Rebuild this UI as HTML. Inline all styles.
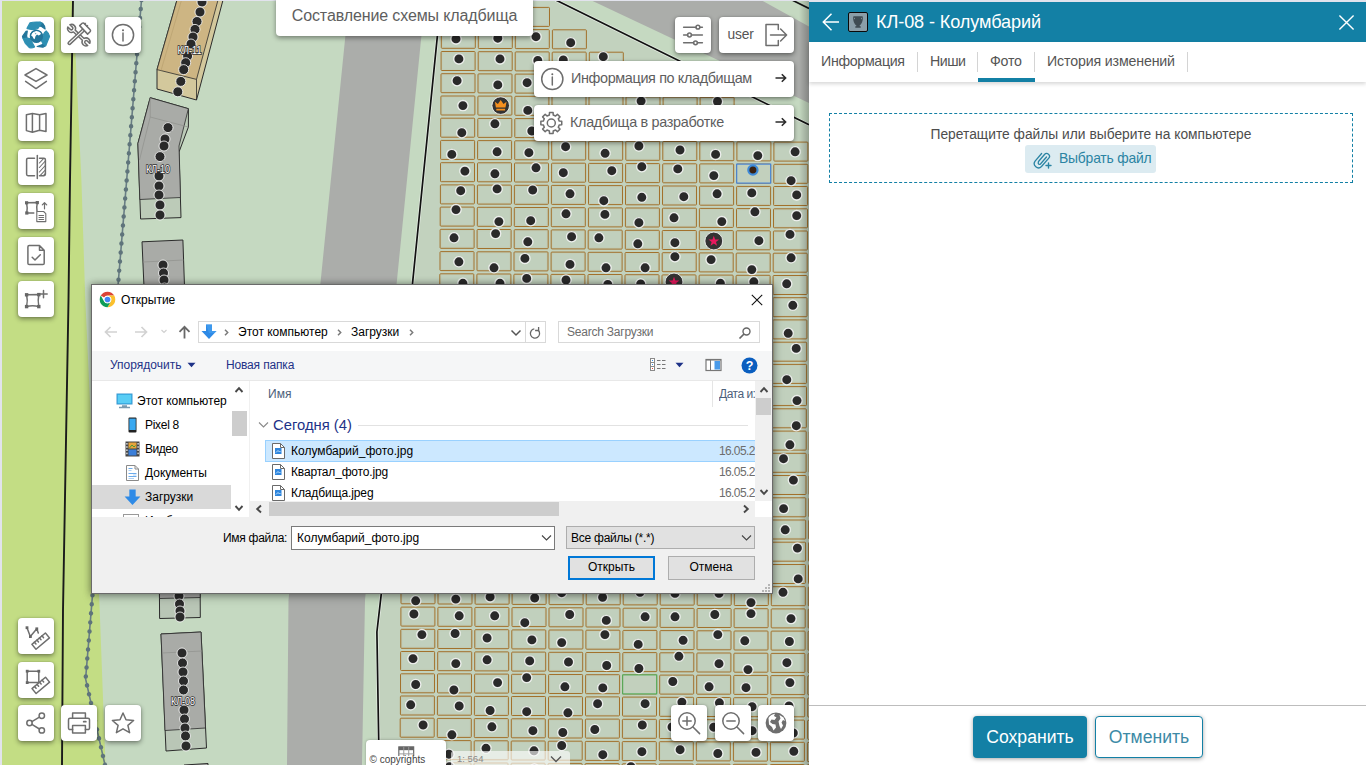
<!DOCTYPE html>
<html lang="ru">
<head>
<meta charset="utf-8">
<title>Составление схемы кладбища</title>
<style>
*{box-sizing:border-box;margin:0;padding:0}
html,body{width:1366px;height:765px;overflow:hidden}
body{position:relative;background:#e2e3ed;font-family:"Liberation Sans",Arial,sans-serif;color:#555}
#mapwrap{position:absolute;left:2px;top:1px;width:807px;height:764px;overflow:hidden;background:#c5d9c1}
#mapwrap svg.map{position:absolute;left:-2px;top:-1px}
.mb{position:absolute;background:#fff;border-radius:4px;box-shadow:0 2px 5px rgba(0,0,0,.42),0 0 2px rgba(0,0,0,.18);width:36px;height:36px}
.mb svg{position:absolute;left:0;top:0;width:36px;height:36px}
.ic{fill:none;stroke:#6e6e6e;stroke-width:1.5;stroke-linecap:round;stroke-linejoin:round}
.bar{position:absolute;left:534px;width:260px;height:36px;background:#fff;border-radius:4px;box-shadow:0 2px 5px rgba(0,0,0,.42),0 0 2px rgba(0,0,0,.18);font-size:14.4px;color:#5e5e5e;line-height:36px;white-space:nowrap;letter-spacing:-.36px}
.bar span.t{position:absolute;left:37px;top:-1px}
.bar span.a{position:absolute;right:9px;top:-2px;font-size:18px;color:#333}
#title{position:absolute;left:276px;top:-4px;width:257px;height:40px;background:#fff;border-radius:4px;box-shadow:0 2px 5px rgba(0,0,0,.42);font-size:16px;letter-spacing:-.12px;color:#5e5e5e;text-align:center;line-height:39px;white-space:nowrap}
#panelshadow{position:absolute;left:797px;top:0;width:12px;height:765px;background:linear-gradient(to right,rgba(0,0,0,0),rgba(0,0,0,.28))}
/* right panel */
#panel{position:absolute;left:809px;top:2px;width:557px;height:763px;background:#fff}
#phead{position:absolute;left:0;top:0;width:557px;height:40px;background:#1380a5;color:#fff}
#phead .ttl{position:absolute;left:67px;top:10px;font-size:18.1px;line-height:21px;white-space:nowrap;letter-spacing:-.1px}
#tabs{position:absolute;left:0;top:40px;width:557px;height:40px;background:#fff;box-shadow:0 2px 4px rgba(0,0,0,.16);font-size:14.2px;color:#555}
#tabs .tab{position:absolute;top:0;height:40px;line-height:38px;white-space:nowrap}
#tabs .sep{position:absolute;top:10px;width:1px;height:20px;background:#d4d4d4}
#tabs .ul{position:absolute;left:169px;top:36px;width:57px;height:4px;background:#1380a5}
#drop{position:absolute;left:20px;top:111px;width:524px;height:70px;border:1px dashed #1380a5}
#drop .msg{position:absolute;left:0;width:100%;top:12px;text-align:center;font-size:13.8px;color:#4d4d4d;line-height:18px;white-space:nowrap}
#drop .pick{position:absolute;left:195px;top:31px;width:131px;height:28px;background:#dcebf1;border-radius:3px;color:#2b84a3;font-size:13.9px;letter-spacing:-.2px;line-height:27px;white-space:nowrap}
#drop .pick span{position:absolute;left:34px;top:0}
#pfoot{position:absolute;left:0;top:703px;width:557px;height:60px;border-top:1px solid #bdbdbd}
.btn{position:absolute;top:10px;height:42px;border-radius:4px;font-size:17.6px;line-height:43px;text-align:center;white-space:nowrap;box-shadow:0 1px 4px rgba(0,0,0,.35)}
#save{left:164px;width:114px;background:#1380a5;color:#fff}
#cancel{left:286px;width:108px;background:#fff;border:1px solid #1380a5;color:#3d8aa6;line-height:41px}
/* dialog */
#dlg{position:absolute;left:91px;top:284px;width:682px;height:310px;background:#f0f0f0;border:1px solid #6a6a6a;box-shadow:0 0 7px rgba(0,0,0,.38),1px 3px 10px rgba(0,0,0,.22);font-family:"Liberation Sans",Arial,sans-serif;font-size:12px;color:#000}
#dlg .abs{position:absolute;white-space:nowrap}
#dlg .top{position:absolute;left:0;top:0;width:680px;height:66px;background:#fff}
#dlg .tb{position:absolute;left:0;top:66px;width:680px;height:30px;background:#f5f6f7;border-bottom:1px solid #e8e8e8}
#dlg .body{position:absolute;left:0;top:96px;width:680px;height:136px;background:#fff}
#dlg .box{position:absolute;border:1px solid #d9d9d9;background:#fff}
#dlg .tx{position:absolute;white-space:nowrap;line-height:14px;font-size:12px}
#dlg .bl{color:#1e3287}
#dlg .wbtn{position:absolute;background:#e1e1e1;border:1px solid #adadad;text-align:center;font-size:12px;line-height:21px}
</style>
</head>
<body>
<div id="mapwrap">
<svg class="map" width="809" height="765" viewBox="0 0 809 765">
<defs>
<linearGradient id="secL" x1="0" y1="0" x2="1" y2="0"><stop offset="0" stop-color="#bccab8"/><stop offset="1" stop-color="#c3d3bf"/></linearGradient>
</defs>
<rect x="0" y="0" width="809" height="765" fill="#c5d9c1"/>
<polygon points="0,0 73,0 81.4,180 85.3,300 99.7,610 105.5,765 0,765" fill="#c3dd84"/>
<polygon points="349,0 425,0 365,600 362,765 287,765 288.5,600" fill="#abadaa"/>
<polygon points="441,0 557.8,1 809,124.8 809,765 379,765 376.9,632 381.5,592" fill="#c2d2be"/>
<polygon points="590.5,0 761,0 809,26.5 809,103" fill="#abadaa"/>
<polyline points="73,0 70,180 68.5,300 63,610 62,765" fill="none" stroke="#1a1a1a" stroke-width="1.9"/>
<polyline points="441,0 381.5,592 376.9,632 378.7,740 379,765" fill="none" stroke="#fff" stroke-opacity=".55" stroke-width="3.2"/>
<polyline points="441,0 381.5,592 376.9,632 378.7,740 379,765" fill="none" stroke="#111" stroke-width="1.7"/>
<polyline points="555.5,0 557.8,1 809,124.8" fill="none" stroke="#fff" stroke-opacity=".5" stroke-width="3.2"/>
<polyline points="555.5,0 557.8,1 809,124.8" fill="none" stroke="#111" stroke-width="1.7"/>
<polyline points="792,0 809,8.5" fill="none" stroke="#111" stroke-width="1.7"/>
<polyline points="141.5,0 85.6,679 105,765" fill="none" stroke="#687d84" stroke-width="1.6"/>
<polyline points="141.5,0 85.6,679 105,765" fill="none" stroke="#5f747b" stroke-width="4.4" stroke-linecap="round" stroke-dasharray="0.1 8.95"/>
<polygon points="177,0 223,0 196.5,100 157,89 157,69.6" fill="#d3c89c" stroke="#2b2b2b" stroke-width="1"/>
<polygon points="177,0 218,0 196.5,79.4 157,69.6" fill="#cdb583" stroke="#2b2b2b" stroke-width=".8"/>
<polyline points="196.5,79.4 196.5,100" fill="none" stroke="#2b2b2b" stroke-width=".8"/>
<polyline points="181.5,0 161,70.6" fill="none" stroke="#b9a070" stroke-width=".7"/>
<polygon points="150.2,97.7 188.4,108.7 188.4,127 179,152 181,217.6 140.6,219 137.9,143.5" fill="#bccbb8" stroke="#2b2b2b" stroke-width="1"/>
<polygon points="150.2,97.7 188.4,108.7 179,146 180.5,197.5 139.8,199.5 137.9,143.5" fill="#a9aba7" stroke="#2b2b2b" stroke-width=".8"/>
<polyline points="150.2,117 188.4,127" fill="none" stroke="#8f918d" stroke-width=".7"/>
<polyline points="150.2,97.7 150.2,117 139.5,160" fill="none" stroke="#8f918d" stroke-width=".7"/>
<polygon points="142,241.8 182.9,240 186,330 146,332" fill="#a9aba7" stroke="#2b2b2b" stroke-width="1"/>
<polyline points="143,262 183.5,260" fill="none" stroke="#8f918d" stroke-width=".7"/>
<polygon points="159.2,560 200,560 200.3,617.5 159.6,618.5" fill="#b9c6b6" stroke="#2b2b2b" stroke-width="1"/>
<polygon points="159.2,560 200,560 200.2,597.5 159.5,598.5" fill="#a9aba7" stroke="#2b2b2b" stroke-width=".8"/>
<polygon points="161,634 201,632 206.5,748 166,751" fill="#b9c6b6" stroke="#2b2b2b" stroke-width="1"/>
<polygon points="161,634 201,632 205.5,728 165,730.5" fill="#a9aba7" stroke="#2b2b2b" stroke-width=".8"/>
<polyline points="162,653 202,651" fill="none" stroke="#8f918d" stroke-width=".7"/>
<polygon points="184,765 208,763.5 208,766 184,766" fill="#a9aba7" stroke="#2b2b2b" stroke-width="1"/>
<g fill="#c1d0bd" stroke="#a06c24" stroke-width=".95">
<rect x="478.6" y="-15.0" width="34.0" height="19.0" rx=".8"/>
<rect x="478.4" y="7.2" width="34.0" height="19.0" rx=".8"/>
<rect x="515.5" y="7.4" width="34.0" height="19.0" rx=".8"/>
<rect x="441.3" y="29.3" width="34.0" height="19.0" rx=".8"/>
<rect x="478.3" y="29.5" width="34.0" height="19.0" rx=".8"/>
<rect x="515.3" y="29.6" width="34.0" height="19.0" rx=".8"/>
<rect x="552.4" y="29.8" width="34.0" height="19.0" rx=".8"/>
<rect x="441.1" y="51.5" width="34.0" height="19.0" rx=".8"/>
<rect x="478.2" y="51.7" width="34.0" height="19.0" rx=".8"/>
<rect x="515.2" y="51.9" width="34.0" height="19.0" rx=".8"/>
<rect x="552.2" y="52.1" width="34.0" height="19.0" rx=".8"/>
<rect x="589.3" y="52.2" width="34.0" height="19.0" rx=".8"/>
<rect x="441.0" y="73.7" width="34.0" height="19.0" rx=".8"/>
<rect x="478.0" y="73.9" width="34.0" height="19.0" rx=".8"/>
<rect x="515.1" y="74.1" width="34.0" height="19.0" rx=".8"/>
<rect x="552.1" y="74.3" width="34.0" height="19.0" rx=".8"/>
<rect x="589.1" y="74.5" width="34.0" height="19.0" rx=".8"/>
<rect x="626.2" y="74.7" width="34.0" height="19.0" rx=".8"/>
<rect x="663.2" y="74.8" width="34.0" height="19.0" rx=".8"/>
<rect x="440.9" y="96.0" width="34.0" height="19.0" rx=".8"/>
<rect x="477.9" y="96.1" width="34.0" height="19.0" rx=".8"/>
<rect x="514.9" y="96.3" width="34.0" height="19.0" rx=".8"/>
<rect x="552.0" y="96.5" width="34.0" height="19.0" rx=".8"/>
<rect x="589.0" y="96.7" width="34.0" height="19.0" rx=".8"/>
<rect x="626.0" y="96.9" width="34.0" height="19.0" rx=".8"/>
<rect x="663.1" y="97.1" width="34.0" height="19.0" rx=".8"/>
<rect x="700.1" y="97.3" width="34.0" height="19.0" rx=".8"/>
<rect x="440.7" y="118.2" width="34.0" height="19.0" rx=".8"/>
<rect x="477.8" y="118.4" width="34.0" height="19.0" rx=".8"/>
<rect x="514.8" y="118.6" width="34.0" height="19.0" rx=".8"/>
<rect x="551.8" y="118.7" width="34.0" height="19.0" rx=".8"/>
<rect x="588.9" y="118.9" width="34.0" height="19.0" rx=".8"/>
<rect x="625.9" y="119.1" width="34.0" height="19.0" rx=".8"/>
<rect x="662.9" y="119.3" width="34.0" height="19.0" rx=".8"/>
<rect x="700.0" y="119.5" width="34.0" height="19.0" rx=".8"/>
<rect x="737.0" y="119.7" width="34.0" height="19.0" rx=".8"/>
<rect x="440.6" y="140.4" width="34.0" height="19.0" rx=".8"/>
<rect x="477.6" y="140.6" width="34.0" height="19.0" rx=".8"/>
<rect x="514.7" y="140.8" width="34.0" height="19.0" rx=".8"/>
<rect x="551.7" y="141.0" width="34.0" height="19.0" rx=".8"/>
<rect x="588.7" y="141.2" width="34.0" height="19.0" rx=".8"/>
<rect x="625.8" y="141.3" width="34.0" height="19.0" rx=".8"/>
<rect x="662.8" y="141.5" width="34.0" height="19.0" rx=".8"/>
<rect x="699.8" y="141.7" width="34.0" height="19.0" rx=".8"/>
<rect x="736.9" y="141.9" width="34.0" height="19.0" rx=".8"/>
<rect x="773.9" y="142.1" width="34.0" height="19.0" rx=".8"/>
<rect x="440.5" y="162.7" width="34.0" height="19.0" rx=".8"/>
<rect x="477.5" y="162.8" width="34.0" height="19.0" rx=".8"/>
<rect x="514.5" y="163.0" width="34.0" height="19.0" rx=".8"/>
<rect x="551.6" y="163.2" width="34.0" height="19.0" rx=".8"/>
<rect x="588.6" y="163.4" width="34.0" height="19.0" rx=".8"/>
<rect x="625.6" y="163.6" width="34.0" height="19.0" rx=".8"/>
<rect x="662.7" y="163.8" width="34.0" height="19.0" rx=".8"/>
<rect x="699.7" y="163.9" width="34.0" height="19.0" rx=".8"/>
<rect x="736.7" y="164.1" width="34.0" height="19.0" rx=".8"/>
<rect x="773.8" y="164.3" width="34.0" height="19.0" rx=".8"/>
<rect x="810.8" y="164.5" width="34.0" height="19.0" rx=".8"/>
<rect x="440.4" y="184.9" width="34.0" height="19.0" rx=".8"/>
<rect x="477.4" y="185.1" width="34.0" height="19.0" rx=".8"/>
<rect x="514.4" y="185.3" width="34.0" height="19.0" rx=".8"/>
<rect x="551.4" y="185.4" width="34.0" height="19.0" rx=".8"/>
<rect x="588.5" y="185.6" width="34.0" height="19.0" rx=".8"/>
<rect x="625.5" y="185.8" width="34.0" height="19.0" rx=".8"/>
<rect x="662.5" y="186.0" width="34.0" height="19.0" rx=".8"/>
<rect x="699.6" y="186.2" width="34.0" height="19.0" rx=".8"/>
<rect x="736.6" y="186.4" width="34.0" height="19.0" rx=".8"/>
<rect x="773.6" y="186.5" width="34.0" height="19.0" rx=".8"/>
<rect x="810.7" y="186.7" width="34.0" height="19.0" rx=".8"/>
<rect x="440.2" y="207.1" width="34.0" height="19.0" rx=".8"/>
<rect x="477.3" y="207.3" width="34.0" height="19.0" rx=".8"/>
<rect x="514.3" y="207.5" width="34.0" height="19.0" rx=".8"/>
<rect x="551.3" y="207.7" width="34.0" height="19.0" rx=".8"/>
<rect x="588.4" y="207.9" width="34.0" height="19.0" rx=".8"/>
<rect x="625.4" y="208.0" width="34.0" height="19.0" rx=".8"/>
<rect x="662.4" y="208.2" width="34.0" height="19.0" rx=".8"/>
<rect x="699.4" y="208.4" width="34.0" height="19.0" rx=".8"/>
<rect x="736.5" y="208.6" width="34.0" height="19.0" rx=".8"/>
<rect x="773.5" y="208.8" width="34.0" height="19.0" rx=".8"/>
<rect x="810.5" y="209.0" width="34.0" height="19.0" rx=".8"/>
<rect x="440.1" y="229.3" width="34.0" height="19.0" rx=".8"/>
<rect x="477.1" y="229.5" width="34.0" height="19.0" rx=".8"/>
<rect x="514.2" y="229.7" width="34.0" height="19.0" rx=".8"/>
<rect x="551.2" y="229.9" width="34.0" height="19.0" rx=".8"/>
<rect x="588.2" y="230.1" width="34.0" height="19.0" rx=".8"/>
<rect x="625.3" y="230.3" width="34.0" height="19.0" rx=".8"/>
<rect x="662.3" y="230.5" width="34.0" height="19.0" rx=".8"/>
<rect x="699.3" y="230.6" width="34.0" height="19.0" rx=".8"/>
<rect x="736.3" y="230.8" width="34.0" height="19.0" rx=".8"/>
<rect x="773.4" y="231.0" width="34.0" height="19.0" rx=".8"/>
<rect x="810.4" y="231.2" width="34.0" height="19.0" rx=".8"/>
<rect x="440.0" y="251.6" width="34.0" height="19.0" rx=".8"/>
<rect x="477.0" y="251.8" width="34.0" height="19.0" rx=".8"/>
<rect x="514.0" y="251.9" width="34.0" height="19.0" rx=".8"/>
<rect x="551.1" y="252.1" width="34.0" height="19.0" rx=".8"/>
<rect x="588.1" y="252.3" width="34.0" height="19.0" rx=".8"/>
<rect x="625.1" y="252.5" width="34.0" height="19.0" rx=".8"/>
<rect x="662.2" y="252.7" width="34.0" height="19.0" rx=".8"/>
<rect x="699.2" y="252.9" width="34.0" height="19.0" rx=".8"/>
<rect x="736.2" y="253.1" width="34.0" height="19.0" rx=".8"/>
<rect x="773.2" y="253.2" width="34.0" height="19.0" rx=".8"/>
<rect x="810.3" y="253.4" width="34.0" height="19.0" rx=".8"/>
<rect x="439.8" y="273.8" width="34.0" height="19.0" rx=".8"/>
<rect x="476.9" y="274.0" width="34.0" height="19.0" rx=".8"/>
<rect x="513.9" y="274.2" width="34.0" height="19.0" rx=".8"/>
<rect x="550.9" y="274.4" width="34.0" height="19.0" rx=".8"/>
<rect x="588.0" y="274.5" width="34.0" height="19.0" rx=".8"/>
<rect x="625.0" y="274.7" width="34.0" height="19.0" rx=".8"/>
<rect x="662.0" y="274.9" width="34.0" height="19.0" rx=".8"/>
<rect x="699.1" y="275.1" width="34.0" height="19.0" rx=".8"/>
<rect x="736.1" y="275.3" width="34.0" height="19.0" rx=".8"/>
<rect x="773.1" y="275.5" width="34.0" height="19.0" rx=".8"/>
<rect x="810.1" y="275.7" width="34.0" height="19.0" rx=".8"/>
<rect x="439.7" y="296.0" width="34.0" height="19.0" rx=".8"/>
<rect x="476.7" y="296.2" width="34.0" height="19.0" rx=".8"/>
<rect x="513.8" y="296.4" width="34.0" height="19.0" rx=".8"/>
<rect x="550.8" y="296.6" width="34.0" height="19.0" rx=".8"/>
<rect x="587.8" y="296.8" width="34.0" height="19.0" rx=".8"/>
<rect x="624.9" y="297.0" width="34.0" height="19.0" rx=".8"/>
<rect x="661.9" y="297.1" width="34.0" height="19.0" rx=".8"/>
<rect x="698.9" y="297.3" width="34.0" height="19.0" rx=".8"/>
<rect x="736.0" y="297.5" width="34.0" height="19.0" rx=".8"/>
<rect x="773.0" y="297.7" width="34.0" height="19.0" rx=".8"/>
<rect x="810.0" y="297.9" width="34.0" height="19.0" rx=".8"/>
<rect x="439.6" y="318.3" width="34.0" height="19.0" rx=".8"/>
<rect x="476.6" y="318.4" width="34.0" height="19.0" rx=".8"/>
<rect x="513.6" y="318.6" width="34.0" height="19.0" rx=".8"/>
<rect x="550.7" y="318.8" width="34.0" height="19.0" rx=".8"/>
<rect x="587.7" y="319.0" width="34.0" height="19.0" rx=".8"/>
<rect x="624.7" y="319.2" width="34.0" height="19.0" rx=".8"/>
<rect x="661.8" y="319.4" width="34.0" height="19.0" rx=".8"/>
<rect x="698.8" y="319.6" width="34.0" height="19.0" rx=".8"/>
<rect x="735.8" y="319.7" width="34.0" height="19.0" rx=".8"/>
<rect x="772.9" y="319.9" width="34.0" height="19.0" rx=".8"/>
<rect x="809.9" y="320.1" width="34.0" height="19.0" rx=".8"/>
<rect x="439.5" y="340.5" width="34.0" height="19.0" rx=".8"/>
<rect x="476.5" y="340.7" width="34.0" height="19.0" rx=".8"/>
<rect x="513.5" y="340.9" width="34.0" height="19.0" rx=".8"/>
<rect x="550.5" y="341.0" width="34.0" height="19.0" rx=".8"/>
<rect x="587.6" y="341.2" width="34.0" height="19.0" rx=".8"/>
<rect x="624.6" y="341.4" width="34.0" height="19.0" rx=".8"/>
<rect x="661.6" y="341.6" width="34.0" height="19.0" rx=".8"/>
<rect x="698.7" y="341.8" width="34.0" height="19.0" rx=".8"/>
<rect x="735.7" y="342.0" width="34.0" height="19.0" rx=".8"/>
<rect x="772.7" y="342.2" width="34.0" height="19.0" rx=".8"/>
<rect x="809.8" y="342.3" width="34.0" height="19.0" rx=".8"/>
<rect x="439.3" y="362.7" width="34.0" height="19.0" rx=".8"/>
<rect x="476.4" y="362.9" width="34.0" height="19.0" rx=".8"/>
<rect x="513.4" y="363.1" width="34.0" height="19.0" rx=".8"/>
<rect x="550.4" y="363.3" width="34.0" height="19.0" rx=".8"/>
<rect x="587.4" y="363.5" width="34.0" height="19.0" rx=".8"/>
<rect x="624.5" y="363.6" width="34.0" height="19.0" rx=".8"/>
<rect x="661.5" y="363.8" width="34.0" height="19.0" rx=".8"/>
<rect x="698.5" y="364.0" width="34.0" height="19.0" rx=".8"/>
<rect x="735.6" y="364.2" width="34.0" height="19.0" rx=".8"/>
<rect x="772.6" y="364.4" width="34.0" height="19.0" rx=".8"/>
<rect x="809.6" y="364.6" width="34.0" height="19.0" rx=".8"/>
<rect x="439.2" y="385.0" width="34.0" height="19.0" rx=".8"/>
<rect x="476.2" y="385.1" width="34.0" height="19.0" rx=".8"/>
<rect x="513.3" y="385.3" width="34.0" height="19.0" rx=".8"/>
<rect x="550.3" y="385.5" width="34.0" height="19.0" rx=".8"/>
<rect x="587.3" y="385.7" width="34.0" height="19.0" rx=".8"/>
<rect x="624.3" y="385.9" width="34.0" height="19.0" rx=".8"/>
<rect x="661.4" y="386.1" width="34.0" height="19.0" rx=".8"/>
<rect x="698.4" y="386.2" width="34.0" height="19.0" rx=".8"/>
<rect x="735.4" y="386.4" width="34.0" height="19.0" rx=".8"/>
<rect x="772.5" y="386.6" width="34.0" height="19.0" rx=".8"/>
<rect x="809.5" y="386.8" width="34.0" height="19.0" rx=".8"/>
<rect x="402.0" y="407.0" width="34.0" height="19.0" rx=".8"/>
<rect x="439.1" y="407.2" width="34.0" height="19.0" rx=".8"/>
<rect x="476.1" y="407.4" width="34.0" height="19.0" rx=".8"/>
<rect x="513.1" y="407.6" width="34.0" height="19.0" rx=".8"/>
<rect x="550.2" y="407.7" width="34.0" height="19.0" rx=".8"/>
<rect x="587.2" y="407.9" width="34.0" height="19.0" rx=".8"/>
<rect x="624.2" y="408.1" width="34.0" height="19.0" rx=".8"/>
<rect x="661.3" y="408.3" width="34.0" height="19.0" rx=".8"/>
<rect x="698.3" y="408.5" width="34.0" height="19.0" rx=".8"/>
<rect x="735.3" y="408.7" width="34.0" height="19.0" rx=".8"/>
<rect x="772.3" y="408.8" width="34.0" height="19.0" rx=".8"/>
<rect x="809.4" y="409.0" width="34.0" height="19.0" rx=".8"/>
<rect x="401.9" y="429.2" width="34.0" height="19.0" rx=".8"/>
<rect x="438.9" y="429.4" width="34.0" height="19.0" rx=".8"/>
<rect x="476.0" y="429.6" width="34.0" height="19.0" rx=".8"/>
<rect x="513.0" y="429.8" width="34.0" height="19.0" rx=".8"/>
<rect x="550.0" y="430.0" width="34.0" height="19.0" rx=".8"/>
<rect x="587.1" y="430.2" width="34.0" height="19.0" rx=".8"/>
<rect x="624.1" y="430.3" width="34.0" height="19.0" rx=".8"/>
<rect x="661.1" y="430.5" width="34.0" height="19.0" rx=".8"/>
<rect x="698.2" y="430.7" width="34.0" height="19.0" rx=".8"/>
<rect x="735.2" y="430.9" width="34.0" height="19.0" rx=".8"/>
<rect x="772.2" y="431.1" width="34.0" height="19.0" rx=".8"/>
<rect x="809.2" y="431.3" width="34.0" height="19.0" rx=".8"/>
<rect x="401.8" y="451.5" width="34.0" height="19.0" rx=".8"/>
<rect x="438.8" y="451.6" width="34.0" height="19.0" rx=".8"/>
<rect x="475.8" y="451.8" width="34.0" height="19.0" rx=".8"/>
<rect x="512.9" y="452.0" width="34.0" height="19.0" rx=".8"/>
<rect x="549.9" y="452.2" width="34.0" height="19.0" rx=".8"/>
<rect x="586.9" y="452.4" width="34.0" height="19.0" rx=".8"/>
<rect x="624.0" y="452.6" width="34.0" height="19.0" rx=".8"/>
<rect x="661.0" y="452.8" width="34.0" height="19.0" rx=".8"/>
<rect x="698.0" y="452.9" width="34.0" height="19.0" rx=".8"/>
<rect x="735.1" y="453.1" width="34.0" height="19.0" rx=".8"/>
<rect x="772.1" y="453.3" width="34.0" height="19.0" rx=".8"/>
<rect x="809.1" y="453.5" width="34.0" height="19.0" rx=".8"/>
<rect x="401.7" y="473.7" width="34.0" height="19.0" rx=".8"/>
<rect x="438.7" y="473.9" width="34.0" height="19.0" rx=".8"/>
<rect x="475.7" y="474.1" width="34.0" height="19.0" rx=".8"/>
<rect x="512.7" y="474.2" width="34.0" height="19.0" rx=".8"/>
<rect x="549.8" y="474.4" width="34.0" height="19.0" rx=".8"/>
<rect x="586.8" y="474.6" width="34.0" height="19.0" rx=".8"/>
<rect x="623.8" y="474.8" width="34.0" height="19.0" rx=".8"/>
<rect x="660.9" y="475.0" width="34.0" height="19.0" rx=".8"/>
<rect x="697.9" y="475.2" width="34.0" height="19.0" rx=".8"/>
<rect x="734.9" y="475.4" width="34.0" height="19.0" rx=".8"/>
<rect x="772.0" y="475.5" width="34.0" height="19.0" rx=".8"/>
<rect x="809.0" y="475.7" width="34.0" height="19.0" rx=".8"/>
<rect x="401.5" y="495.9" width="34.0" height="19.0" rx=".8"/>
<rect x="438.6" y="496.1" width="34.0" height="19.0" rx=".8"/>
<rect x="475.6" y="496.3" width="34.0" height="19.0" rx=".8"/>
<rect x="512.6" y="496.5" width="34.0" height="19.0" rx=".8"/>
<rect x="549.6" y="496.7" width="34.0" height="19.0" rx=".8"/>
<rect x="586.7" y="496.8" width="34.0" height="19.0" rx=".8"/>
<rect x="623.7" y="497.0" width="34.0" height="19.0" rx=".8"/>
<rect x="660.7" y="497.2" width="34.0" height="19.0" rx=".8"/>
<rect x="697.8" y="497.4" width="34.0" height="19.0" rx=".8"/>
<rect x="734.8" y="497.6" width="34.0" height="19.0" rx=".8"/>
<rect x="771.8" y="497.8" width="34.0" height="19.0" rx=".8"/>
<rect x="808.9" y="498.0" width="34.0" height="19.0" rx=".8"/>
<rect x="401.4" y="518.1" width="34.0" height="19.0" rx=".8"/>
<rect x="438.4" y="518.3" width="34.0" height="19.0" rx=".8"/>
<rect x="475.5" y="518.5" width="34.0" height="19.0" rx=".8"/>
<rect x="512.5" y="518.7" width="34.0" height="19.0" rx=".8"/>
<rect x="549.5" y="518.9" width="34.0" height="19.0" rx=".8"/>
<rect x="586.5" y="519.1" width="34.0" height="19.0" rx=".8"/>
<rect x="623.6" y="519.3" width="34.0" height="19.0" rx=".8"/>
<rect x="660.6" y="519.4" width="34.0" height="19.0" rx=".8"/>
<rect x="697.6" y="519.6" width="34.0" height="19.0" rx=".8"/>
<rect x="734.7" y="519.8" width="34.0" height="19.0" rx=".8"/>
<rect x="771.7" y="520.0" width="34.0" height="19.0" rx=".8"/>
<rect x="808.7" y="520.2" width="34.0" height="19.0" rx=".8"/>
<rect x="401.3" y="540.4" width="34.0" height="19.0" rx=".8"/>
<rect x="438.3" y="540.6" width="34.0" height="19.0" rx=".8"/>
<rect x="475.3" y="540.7" width="34.0" height="19.0" rx=".8"/>
<rect x="512.4" y="540.9" width="34.0" height="19.0" rx=".8"/>
<rect x="549.4" y="541.1" width="34.0" height="19.0" rx=".8"/>
<rect x="586.4" y="541.3" width="34.0" height="19.0" rx=".8"/>
<rect x="623.4" y="541.5" width="34.0" height="19.0" rx=".8"/>
<rect x="660.5" y="541.7" width="34.0" height="19.0" rx=".8"/>
<rect x="697.5" y="541.9" width="34.0" height="19.0" rx=".8"/>
<rect x="734.5" y="542.0" width="34.0" height="19.0" rx=".8"/>
<rect x="771.6" y="542.2" width="34.0" height="19.0" rx=".8"/>
<rect x="808.6" y="542.4" width="34.0" height="19.0" rx=".8"/>
<rect x="401.1" y="562.6" width="34.0" height="19.0" rx=".8"/>
<rect x="438.2" y="562.8" width="34.0" height="19.0" rx=".8"/>
<rect x="475.2" y="563.0" width="34.0" height="19.0" rx=".8"/>
<rect x="512.2" y="563.2" width="34.0" height="19.0" rx=".8"/>
<rect x="549.3" y="563.3" width="34.0" height="19.0" rx=".8"/>
<rect x="586.3" y="563.5" width="34.0" height="19.0" rx=".8"/>
<rect x="623.3" y="563.7" width="34.0" height="19.0" rx=".8"/>
<rect x="660.3" y="563.9" width="34.0" height="19.0" rx=".8"/>
<rect x="697.4" y="564.1" width="34.0" height="19.0" rx=".8"/>
<rect x="734.4" y="564.3" width="34.0" height="19.0" rx=".8"/>
<rect x="771.4" y="564.5" width="34.0" height="19.0" rx=".8"/>
<rect x="808.5" y="564.6" width="34.0" height="19.0" rx=".8"/>
<rect x="401.0" y="584.8" width="34.0" height="19.0" rx=".8"/>
<rect x="438.0" y="585.0" width="34.0" height="19.0" rx=".8"/>
<rect x="475.1" y="585.2" width="34.0" height="19.0" rx=".8"/>
<rect x="512.1" y="585.4" width="34.0" height="19.0" rx=".8"/>
<rect x="549.1" y="585.6" width="34.0" height="19.0" rx=".8"/>
<rect x="586.2" y="585.8" width="34.0" height="19.0" rx=".8"/>
<rect x="623.2" y="585.9" width="34.0" height="19.0" rx=".8"/>
<rect x="660.2" y="586.1" width="34.0" height="19.0" rx=".8"/>
<rect x="697.2" y="586.3" width="34.0" height="19.0" rx=".8"/>
<rect x="734.3" y="586.5" width="34.0" height="19.0" rx=".8"/>
<rect x="771.3" y="586.7" width="34.0" height="19.0" rx=".8"/>
<rect x="808.3" y="586.9" width="34.0" height="19.0" rx=".8"/>
<rect x="400.9" y="607.1" width="34.0" height="19.0" rx=".8"/>
<rect x="437.9" y="607.3" width="34.0" height="19.0" rx=".8"/>
<rect x="474.9" y="607.4" width="34.0" height="19.0" rx=".8"/>
<rect x="512.0" y="607.6" width="34.0" height="19.0" rx=".8"/>
<rect x="549.0" y="607.8" width="34.0" height="19.0" rx=".8"/>
<rect x="586.0" y="608.0" width="34.0" height="19.0" rx=".8"/>
<rect x="623.1" y="608.2" width="34.0" height="19.0" rx=".8"/>
<rect x="660.1" y="608.4" width="34.0" height="19.0" rx=".8"/>
<rect x="697.1" y="608.5" width="34.0" height="19.0" rx=".8"/>
<rect x="734.1" y="608.7" width="34.0" height="19.0" rx=".8"/>
<rect x="771.2" y="608.9" width="34.0" height="19.0" rx=".8"/>
<rect x="808.2" y="609.1" width="34.0" height="19.0" rx=".8"/>
<rect x="400.8" y="629.3" width="34.0" height="19.0" rx=".8"/>
<rect x="437.8" y="629.5" width="34.0" height="19.0" rx=".8"/>
<rect x="474.8" y="629.7" width="34.0" height="19.0" rx=".8"/>
<rect x="511.8" y="629.9" width="34.0" height="19.0" rx=".8"/>
<rect x="548.9" y="630.0" width="34.0" height="19.0" rx=".8"/>
<rect x="585.9" y="630.2" width="34.0" height="19.0" rx=".8"/>
<rect x="622.9" y="630.4" width="34.0" height="19.0" rx=".8"/>
<rect x="660.0" y="630.6" width="34.0" height="19.0" rx=".8"/>
<rect x="697.0" y="630.8" width="34.0" height="19.0" rx=".8"/>
<rect x="734.0" y="631.0" width="34.0" height="19.0" rx=".8"/>
<rect x="771.1" y="631.1" width="34.0" height="19.0" rx=".8"/>
<rect x="808.1" y="631.3" width="34.0" height="19.0" rx=".8"/>
<rect x="400.6" y="651.5" width="34.0" height="19.0" rx=".8"/>
<rect x="437.7" y="651.7" width="34.0" height="19.0" rx=".8"/>
<rect x="474.7" y="651.9" width="34.0" height="19.0" rx=".8"/>
<rect x="511.7" y="652.1" width="34.0" height="19.0" rx=".8"/>
<rect x="548.7" y="652.3" width="34.0" height="19.0" rx=".8"/>
<rect x="585.8" y="652.5" width="34.0" height="19.0" rx=".8"/>
<rect x="622.8" y="652.6" width="34.0" height="19.0" rx=".8"/>
<rect x="659.8" y="652.8" width="34.0" height="19.0" rx=".8"/>
<rect x="696.9" y="653.0" width="34.0" height="19.0" rx=".8"/>
<rect x="733.9" y="653.2" width="34.0" height="19.0" rx=".8"/>
<rect x="770.9" y="653.4" width="34.0" height="19.0" rx=".8"/>
<rect x="808.0" y="653.6" width="34.0" height="19.0" rx=".8"/>
<rect x="400.5" y="673.8" width="34.0" height="19.0" rx=".8"/>
<rect x="437.5" y="673.9" width="34.0" height="19.0" rx=".8"/>
<rect x="474.6" y="674.1" width="34.0" height="19.0" rx=".8"/>
<rect x="511.6" y="674.3" width="34.0" height="19.0" rx=".8"/>
<rect x="548.6" y="674.5" width="34.0" height="19.0" rx=".8"/>
<rect x="585.6" y="674.7" width="34.0" height="19.0" rx=".8"/>
<rect x="622.7" y="674.9" width="34.0" height="19.0" rx=".8"/>
<rect x="659.7" y="675.1" width="34.0" height="19.0" rx=".8"/>
<rect x="696.7" y="675.2" width="34.0" height="19.0" rx=".8"/>
<rect x="733.8" y="675.4" width="34.0" height="19.0" rx=".8"/>
<rect x="770.8" y="675.6" width="34.0" height="19.0" rx=".8"/>
<rect x="807.8" y="675.8" width="34.0" height="19.0" rx=".8"/>
<rect x="400.4" y="696.0" width="34.0" height="19.0" rx=".8"/>
<rect x="437.4" y="696.2" width="34.0" height="19.0" rx=".8"/>
<rect x="474.4" y="696.4" width="34.0" height="19.0" rx=".8"/>
<rect x="511.5" y="696.5" width="34.0" height="19.0" rx=".8"/>
<rect x="548.5" y="696.7" width="34.0" height="19.0" rx=".8"/>
<rect x="585.5" y="696.9" width="34.0" height="19.0" rx=".8"/>
<rect x="622.5" y="697.1" width="34.0" height="19.0" rx=".8"/>
<rect x="659.6" y="697.3" width="34.0" height="19.0" rx=".8"/>
<rect x="696.6" y="697.5" width="34.0" height="19.0" rx=".8"/>
<rect x="733.6" y="697.7" width="34.0" height="19.0" rx=".8"/>
<rect x="770.7" y="697.8" width="34.0" height="19.0" rx=".8"/>
<rect x="807.7" y="698.0" width="34.0" height="19.0" rx=".8"/>
<rect x="400.2" y="718.2" width="34.0" height="19.0" rx=".8"/>
<rect x="437.3" y="718.4" width="34.0" height="19.0" rx=".8"/>
<rect x="474.3" y="718.6" width="34.0" height="19.0" rx=".8"/>
<rect x="511.3" y="718.8" width="34.0" height="19.0" rx=".8"/>
<rect x="548.4" y="719.0" width="34.0" height="19.0" rx=".8"/>
<rect x="585.4" y="719.1" width="34.0" height="19.0" rx=".8"/>
<rect x="622.4" y="719.3" width="34.0" height="19.0" rx=".8"/>
<rect x="659.4" y="719.5" width="34.0" height="19.0" rx=".8"/>
<rect x="696.5" y="719.7" width="34.0" height="19.0" rx=".8"/>
<rect x="733.5" y="719.9" width="34.0" height="19.0" rx=".8"/>
<rect x="770.5" y="720.1" width="34.0" height="19.0" rx=".8"/>
<rect x="807.6" y="720.3" width="34.0" height="19.0" rx=".8"/>
<rect x="400.1" y="740.4" width="34.0" height="19.0" rx=".8"/>
<rect x="437.1" y="740.6" width="34.0" height="19.0" rx=".8"/>
<rect x="474.2" y="740.8" width="34.0" height="19.0" rx=".8"/>
<rect x="511.2" y="741.0" width="34.0" height="19.0" rx=".8"/>
<rect x="548.2" y="741.2" width="34.0" height="19.0" rx=".8"/>
<rect x="585.3" y="741.4" width="34.0" height="19.0" rx=".8"/>
<rect x="622.3" y="741.6" width="34.0" height="19.0" rx=".8"/>
<rect x="659.3" y="741.7" width="34.0" height="19.0" rx=".8"/>
<rect x="696.3" y="741.9" width="34.0" height="19.0" rx=".8"/>
<rect x="733.4" y="742.1" width="34.0" height="19.0" rx=".8"/>
<rect x="770.4" y="742.3" width="34.0" height="19.0" rx=".8"/>
<rect x="807.4" y="742.5" width="34.0" height="19.0" rx=".8"/>
<rect x="400.0" y="762.7" width="34.0" height="19.0" rx=".8"/>
<rect x="437.0" y="762.9" width="34.0" height="19.0" rx=".8"/>
<rect x="474.0" y="763.0" width="34.0" height="19.0" rx=".8"/>
<rect x="511.1" y="763.2" width="34.0" height="19.0" rx=".8"/>
<rect x="548.1" y="763.4" width="34.0" height="19.0" rx=".8"/>
<rect x="585.1" y="763.6" width="34.0" height="19.0" rx=".8"/>
<rect x="622.2" y="763.8" width="34.0" height="19.0" rx=".8"/>
<rect x="659.2" y="764.0" width="34.0" height="19.0" rx=".8"/>
<rect x="696.2" y="764.2" width="34.0" height="19.0" rx=".8"/>
<rect x="733.2" y="764.3" width="34.0" height="19.0" rx=".8"/>
<rect x="770.3" y="764.5" width="34.0" height="19.0" rx=".8"/>
<rect x="807.3" y="764.7" width="34.0" height="19.0" rx=".8"/>
</g>
<g fill="none" stroke="#c9ad7c" stroke-opacity=".1" stroke-width="1">
<rect x="479.7" y="-13.9" width="31.8" height="16.8" rx=".6"/>
<rect x="479.5" y="8.3" width="31.8" height="16.8" rx=".6"/>
<rect x="516.6" y="8.5" width="31.8" height="16.8" rx=".6"/>
<rect x="442.4" y="30.4" width="31.8" height="16.8" rx=".6"/>
<rect x="479.4" y="30.6" width="31.8" height="16.8" rx=".6"/>
<rect x="516.4" y="30.7" width="31.8" height="16.8" rx=".6"/>
<rect x="553.5" y="30.9" width="31.8" height="16.8" rx=".6"/>
<rect x="442.2" y="52.6" width="31.8" height="16.8" rx=".6"/>
<rect x="479.3" y="52.8" width="31.8" height="16.8" rx=".6"/>
<rect x="516.3" y="53.0" width="31.8" height="16.8" rx=".6"/>
<rect x="553.3" y="53.2" width="31.8" height="16.8" rx=".6"/>
<rect x="590.4" y="53.3" width="31.8" height="16.8" rx=".6"/>
<rect x="442.1" y="74.8" width="31.8" height="16.8" rx=".6"/>
<rect x="479.1" y="75.0" width="31.8" height="16.8" rx=".6"/>
<rect x="516.2" y="75.2" width="31.8" height="16.8" rx=".6"/>
<rect x="553.2" y="75.4" width="31.8" height="16.8" rx=".6"/>
<rect x="590.2" y="75.6" width="31.8" height="16.8" rx=".6"/>
<rect x="627.3" y="75.8" width="31.8" height="16.8" rx=".6"/>
<rect x="664.3" y="75.9" width="31.8" height="16.8" rx=".6"/>
<rect x="442.0" y="97.1" width="31.8" height="16.8" rx=".6"/>
<rect x="479.0" y="97.2" width="31.8" height="16.8" rx=".6"/>
<rect x="516.0" y="97.4" width="31.8" height="16.8" rx=".6"/>
<rect x="553.1" y="97.6" width="31.8" height="16.8" rx=".6"/>
<rect x="590.1" y="97.8" width="31.8" height="16.8" rx=".6"/>
<rect x="627.1" y="98.0" width="31.8" height="16.8" rx=".6"/>
<rect x="664.2" y="98.2" width="31.8" height="16.8" rx=".6"/>
<rect x="701.2" y="98.4" width="31.8" height="16.8" rx=".6"/>
<rect x="441.8" y="119.3" width="31.8" height="16.8" rx=".6"/>
<rect x="478.9" y="119.5" width="31.8" height="16.8" rx=".6"/>
<rect x="515.9" y="119.7" width="31.8" height="16.8" rx=".6"/>
<rect x="552.9" y="119.8" width="31.8" height="16.8" rx=".6"/>
<rect x="590.0" y="120.0" width="31.8" height="16.8" rx=".6"/>
<rect x="627.0" y="120.2" width="31.8" height="16.8" rx=".6"/>
<rect x="664.0" y="120.4" width="31.8" height="16.8" rx=".6"/>
<rect x="701.1" y="120.6" width="31.8" height="16.8" rx=".6"/>
<rect x="738.1" y="120.8" width="31.8" height="16.8" rx=".6"/>
<rect x="441.7" y="141.5" width="31.8" height="16.8" rx=".6"/>
<rect x="478.7" y="141.7" width="31.8" height="16.8" rx=".6"/>
<rect x="515.8" y="141.9" width="31.8" height="16.8" rx=".6"/>
<rect x="552.8" y="142.1" width="31.8" height="16.8" rx=".6"/>
<rect x="589.8" y="142.3" width="31.8" height="16.8" rx=".6"/>
<rect x="626.9" y="142.4" width="31.8" height="16.8" rx=".6"/>
<rect x="663.9" y="142.6" width="31.8" height="16.8" rx=".6"/>
<rect x="700.9" y="142.8" width="31.8" height="16.8" rx=".6"/>
<rect x="738.0" y="143.0" width="31.8" height="16.8" rx=".6"/>
<rect x="775.0" y="143.2" width="31.8" height="16.8" rx=".6"/>
<rect x="441.6" y="163.8" width="31.8" height="16.8" rx=".6"/>
<rect x="478.6" y="163.9" width="31.8" height="16.8" rx=".6"/>
<rect x="515.6" y="164.1" width="31.8" height="16.8" rx=".6"/>
<rect x="552.7" y="164.3" width="31.8" height="16.8" rx=".6"/>
<rect x="589.7" y="164.5" width="31.8" height="16.8" rx=".6"/>
<rect x="626.7" y="164.7" width="31.8" height="16.8" rx=".6"/>
<rect x="663.8" y="164.9" width="31.8" height="16.8" rx=".6"/>
<rect x="700.8" y="165.0" width="31.8" height="16.8" rx=".6"/>
<rect x="737.8" y="165.2" width="31.8" height="16.8" rx=".6"/>
<rect x="774.9" y="165.4" width="31.8" height="16.8" rx=".6"/>
<rect x="811.9" y="165.6" width="31.8" height="16.8" rx=".6"/>
<rect x="441.5" y="186.0" width="31.8" height="16.8" rx=".6"/>
<rect x="478.5" y="186.2" width="31.8" height="16.8" rx=".6"/>
<rect x="515.5" y="186.4" width="31.8" height="16.8" rx=".6"/>
<rect x="552.5" y="186.5" width="31.8" height="16.8" rx=".6"/>
<rect x="589.6" y="186.7" width="31.8" height="16.8" rx=".6"/>
<rect x="626.6" y="186.9" width="31.8" height="16.8" rx=".6"/>
<rect x="663.6" y="187.1" width="31.8" height="16.8" rx=".6"/>
<rect x="700.7" y="187.3" width="31.8" height="16.8" rx=".6"/>
<rect x="737.7" y="187.5" width="31.8" height="16.8" rx=".6"/>
<rect x="774.7" y="187.6" width="31.8" height="16.8" rx=".6"/>
<rect x="811.8" y="187.8" width="31.8" height="16.8" rx=".6"/>
<rect x="441.3" y="208.2" width="31.8" height="16.8" rx=".6"/>
<rect x="478.4" y="208.4" width="31.8" height="16.8" rx=".6"/>
<rect x="515.4" y="208.6" width="31.8" height="16.8" rx=".6"/>
<rect x="552.4" y="208.8" width="31.8" height="16.8" rx=".6"/>
<rect x="589.5" y="209.0" width="31.8" height="16.8" rx=".6"/>
<rect x="626.5" y="209.1" width="31.8" height="16.8" rx=".6"/>
<rect x="663.5" y="209.3" width="31.8" height="16.8" rx=".6"/>
<rect x="700.5" y="209.5" width="31.8" height="16.8" rx=".6"/>
<rect x="737.6" y="209.7" width="31.8" height="16.8" rx=".6"/>
<rect x="774.6" y="209.9" width="31.8" height="16.8" rx=".6"/>
<rect x="811.6" y="210.1" width="31.8" height="16.8" rx=".6"/>
<rect x="441.2" y="230.4" width="31.8" height="16.8" rx=".6"/>
<rect x="478.2" y="230.6" width="31.8" height="16.8" rx=".6"/>
<rect x="515.3" y="230.8" width="31.8" height="16.8" rx=".6"/>
<rect x="552.3" y="231.0" width="31.8" height="16.8" rx=".6"/>
<rect x="589.3" y="231.2" width="31.8" height="16.8" rx=".6"/>
<rect x="626.4" y="231.4" width="31.8" height="16.8" rx=".6"/>
<rect x="663.4" y="231.6" width="31.8" height="16.8" rx=".6"/>
<rect x="700.4" y="231.7" width="31.8" height="16.8" rx=".6"/>
<rect x="737.4" y="231.9" width="31.8" height="16.8" rx=".6"/>
<rect x="774.5" y="232.1" width="31.8" height="16.8" rx=".6"/>
<rect x="811.5" y="232.3" width="31.8" height="16.8" rx=".6"/>
<rect x="441.1" y="252.7" width="31.8" height="16.8" rx=".6"/>
<rect x="478.1" y="252.9" width="31.8" height="16.8" rx=".6"/>
<rect x="515.1" y="253.0" width="31.8" height="16.8" rx=".6"/>
<rect x="552.2" y="253.2" width="31.8" height="16.8" rx=".6"/>
<rect x="589.2" y="253.4" width="31.8" height="16.8" rx=".6"/>
<rect x="626.2" y="253.6" width="31.8" height="16.8" rx=".6"/>
<rect x="663.3" y="253.8" width="31.8" height="16.8" rx=".6"/>
<rect x="700.3" y="254.0" width="31.8" height="16.8" rx=".6"/>
<rect x="737.3" y="254.2" width="31.8" height="16.8" rx=".6"/>
<rect x="774.3" y="254.3" width="31.8" height="16.8" rx=".6"/>
<rect x="811.4" y="254.5" width="31.8" height="16.8" rx=".6"/>
<rect x="440.9" y="274.9" width="31.8" height="16.8" rx=".6"/>
<rect x="478.0" y="275.1" width="31.8" height="16.8" rx=".6"/>
<rect x="515.0" y="275.3" width="31.8" height="16.8" rx=".6"/>
<rect x="552.0" y="275.5" width="31.8" height="16.8" rx=".6"/>
<rect x="589.1" y="275.6" width="31.8" height="16.8" rx=".6"/>
<rect x="626.1" y="275.8" width="31.8" height="16.8" rx=".6"/>
<rect x="663.1" y="276.0" width="31.8" height="16.8" rx=".6"/>
<rect x="700.2" y="276.2" width="31.8" height="16.8" rx=".6"/>
<rect x="737.2" y="276.4" width="31.8" height="16.8" rx=".6"/>
<rect x="774.2" y="276.6" width="31.8" height="16.8" rx=".6"/>
<rect x="811.2" y="276.8" width="31.8" height="16.8" rx=".6"/>
<rect x="440.8" y="297.1" width="31.8" height="16.8" rx=".6"/>
<rect x="477.8" y="297.3" width="31.8" height="16.8" rx=".6"/>
<rect x="514.9" y="297.5" width="31.8" height="16.8" rx=".6"/>
<rect x="551.9" y="297.7" width="31.8" height="16.8" rx=".6"/>
<rect x="588.9" y="297.9" width="31.8" height="16.8" rx=".6"/>
<rect x="626.0" y="298.1" width="31.8" height="16.8" rx=".6"/>
<rect x="663.0" y="298.2" width="31.8" height="16.8" rx=".6"/>
<rect x="700.0" y="298.4" width="31.8" height="16.8" rx=".6"/>
<rect x="737.1" y="298.6" width="31.8" height="16.8" rx=".6"/>
<rect x="774.1" y="298.8" width="31.8" height="16.8" rx=".6"/>
<rect x="811.1" y="299.0" width="31.8" height="16.8" rx=".6"/>
<rect x="440.7" y="319.4" width="31.8" height="16.8" rx=".6"/>
<rect x="477.7" y="319.5" width="31.8" height="16.8" rx=".6"/>
<rect x="514.7" y="319.7" width="31.8" height="16.8" rx=".6"/>
<rect x="551.8" y="319.9" width="31.8" height="16.8" rx=".6"/>
<rect x="588.8" y="320.1" width="31.8" height="16.8" rx=".6"/>
<rect x="625.8" y="320.3" width="31.8" height="16.8" rx=".6"/>
<rect x="662.9" y="320.5" width="31.8" height="16.8" rx=".6"/>
<rect x="699.9" y="320.7" width="31.8" height="16.8" rx=".6"/>
<rect x="736.9" y="320.8" width="31.8" height="16.8" rx=".6"/>
<rect x="774.0" y="321.0" width="31.8" height="16.8" rx=".6"/>
<rect x="811.0" y="321.2" width="31.8" height="16.8" rx=".6"/>
<rect x="440.6" y="341.6" width="31.8" height="16.8" rx=".6"/>
<rect x="477.6" y="341.8" width="31.8" height="16.8" rx=".6"/>
<rect x="514.6" y="342.0" width="31.8" height="16.8" rx=".6"/>
<rect x="551.6" y="342.1" width="31.8" height="16.8" rx=".6"/>
<rect x="588.7" y="342.3" width="31.8" height="16.8" rx=".6"/>
<rect x="625.7" y="342.5" width="31.8" height="16.8" rx=".6"/>
<rect x="662.7" y="342.7" width="31.8" height="16.8" rx=".6"/>
<rect x="699.8" y="342.9" width="31.8" height="16.8" rx=".6"/>
<rect x="736.8" y="343.1" width="31.8" height="16.8" rx=".6"/>
<rect x="773.8" y="343.3" width="31.8" height="16.8" rx=".6"/>
<rect x="810.9" y="343.4" width="31.8" height="16.8" rx=".6"/>
<rect x="440.4" y="363.8" width="31.8" height="16.8" rx=".6"/>
<rect x="477.5" y="364.0" width="31.8" height="16.8" rx=".6"/>
<rect x="514.5" y="364.2" width="31.8" height="16.8" rx=".6"/>
<rect x="551.5" y="364.4" width="31.8" height="16.8" rx=".6"/>
<rect x="588.5" y="364.6" width="31.8" height="16.8" rx=".6"/>
<rect x="625.6" y="364.7" width="31.8" height="16.8" rx=".6"/>
<rect x="662.6" y="364.9" width="31.8" height="16.8" rx=".6"/>
<rect x="699.6" y="365.1" width="31.8" height="16.8" rx=".6"/>
<rect x="736.7" y="365.3" width="31.8" height="16.8" rx=".6"/>
<rect x="773.7" y="365.5" width="31.8" height="16.8" rx=".6"/>
<rect x="810.7" y="365.7" width="31.8" height="16.8" rx=".6"/>
<rect x="440.3" y="386.1" width="31.8" height="16.8" rx=".6"/>
<rect x="477.3" y="386.2" width="31.8" height="16.8" rx=".6"/>
<rect x="514.4" y="386.4" width="31.8" height="16.8" rx=".6"/>
<rect x="551.4" y="386.6" width="31.8" height="16.8" rx=".6"/>
<rect x="588.4" y="386.8" width="31.8" height="16.8" rx=".6"/>
<rect x="625.4" y="387.0" width="31.8" height="16.8" rx=".6"/>
<rect x="662.5" y="387.2" width="31.8" height="16.8" rx=".6"/>
<rect x="699.5" y="387.3" width="31.8" height="16.8" rx=".6"/>
<rect x="736.5" y="387.5" width="31.8" height="16.8" rx=".6"/>
<rect x="773.6" y="387.7" width="31.8" height="16.8" rx=".6"/>
<rect x="810.6" y="387.9" width="31.8" height="16.8" rx=".6"/>
<rect x="403.1" y="408.1" width="31.8" height="16.8" rx=".6"/>
<rect x="440.2" y="408.3" width="31.8" height="16.8" rx=".6"/>
<rect x="477.2" y="408.5" width="31.8" height="16.8" rx=".6"/>
<rect x="514.2" y="408.7" width="31.8" height="16.8" rx=".6"/>
<rect x="551.3" y="408.8" width="31.8" height="16.8" rx=".6"/>
<rect x="588.3" y="409.0" width="31.8" height="16.8" rx=".6"/>
<rect x="625.3" y="409.2" width="31.8" height="16.8" rx=".6"/>
<rect x="662.4" y="409.4" width="31.8" height="16.8" rx=".6"/>
<rect x="699.4" y="409.6" width="31.8" height="16.8" rx=".6"/>
<rect x="736.4" y="409.8" width="31.8" height="16.8" rx=".6"/>
<rect x="773.4" y="409.9" width="31.8" height="16.8" rx=".6"/>
<rect x="810.5" y="410.1" width="31.8" height="16.8" rx=".6"/>
<rect x="403.0" y="430.3" width="31.8" height="16.8" rx=".6"/>
<rect x="440.0" y="430.5" width="31.8" height="16.8" rx=".6"/>
<rect x="477.1" y="430.7" width="31.8" height="16.8" rx=".6"/>
<rect x="514.1" y="430.9" width="31.8" height="16.8" rx=".6"/>
<rect x="551.1" y="431.1" width="31.8" height="16.8" rx=".6"/>
<rect x="588.2" y="431.3" width="31.8" height="16.8" rx=".6"/>
<rect x="625.2" y="431.4" width="31.8" height="16.8" rx=".6"/>
<rect x="662.2" y="431.6" width="31.8" height="16.8" rx=".6"/>
<rect x="699.3" y="431.8" width="31.8" height="16.8" rx=".6"/>
<rect x="736.3" y="432.0" width="31.8" height="16.8" rx=".6"/>
<rect x="773.3" y="432.2" width="31.8" height="16.8" rx=".6"/>
<rect x="810.3" y="432.4" width="31.8" height="16.8" rx=".6"/>
<rect x="402.9" y="452.6" width="31.8" height="16.8" rx=".6"/>
<rect x="439.9" y="452.7" width="31.8" height="16.8" rx=".6"/>
<rect x="476.9" y="452.9" width="31.8" height="16.8" rx=".6"/>
<rect x="514.0" y="453.1" width="31.8" height="16.8" rx=".6"/>
<rect x="551.0" y="453.3" width="31.8" height="16.8" rx=".6"/>
<rect x="588.0" y="453.5" width="31.8" height="16.8" rx=".6"/>
<rect x="625.1" y="453.7" width="31.8" height="16.8" rx=".6"/>
<rect x="662.1" y="453.9" width="31.8" height="16.8" rx=".6"/>
<rect x="699.1" y="454.0" width="31.8" height="16.8" rx=".6"/>
<rect x="736.2" y="454.2" width="31.8" height="16.8" rx=".6"/>
<rect x="773.2" y="454.4" width="31.8" height="16.8" rx=".6"/>
<rect x="810.2" y="454.6" width="31.8" height="16.8" rx=".6"/>
<rect x="402.8" y="474.8" width="31.8" height="16.8" rx=".6"/>
<rect x="439.8" y="475.0" width="31.8" height="16.8" rx=".6"/>
<rect x="476.8" y="475.2" width="31.8" height="16.8" rx=".6"/>
<rect x="513.8" y="475.3" width="31.8" height="16.8" rx=".6"/>
<rect x="550.9" y="475.5" width="31.8" height="16.8" rx=".6"/>
<rect x="587.9" y="475.7" width="31.8" height="16.8" rx=".6"/>
<rect x="624.9" y="475.9" width="31.8" height="16.8" rx=".6"/>
<rect x="662.0" y="476.1" width="31.8" height="16.8" rx=".6"/>
<rect x="699.0" y="476.3" width="31.8" height="16.8" rx=".6"/>
<rect x="736.0" y="476.5" width="31.8" height="16.8" rx=".6"/>
<rect x="773.1" y="476.6" width="31.8" height="16.8" rx=".6"/>
<rect x="810.1" y="476.8" width="31.8" height="16.8" rx=".6"/>
<rect x="402.6" y="497.0" width="31.8" height="16.8" rx=".6"/>
<rect x="439.7" y="497.2" width="31.8" height="16.8" rx=".6"/>
<rect x="476.7" y="497.4" width="31.8" height="16.8" rx=".6"/>
<rect x="513.7" y="497.6" width="31.8" height="16.8" rx=".6"/>
<rect x="550.7" y="497.8" width="31.8" height="16.8" rx=".6"/>
<rect x="587.8" y="497.9" width="31.8" height="16.8" rx=".6"/>
<rect x="624.8" y="498.1" width="31.8" height="16.8" rx=".6"/>
<rect x="661.8" y="498.3" width="31.8" height="16.8" rx=".6"/>
<rect x="698.9" y="498.5" width="31.8" height="16.8" rx=".6"/>
<rect x="735.9" y="498.7" width="31.8" height="16.8" rx=".6"/>
<rect x="772.9" y="498.9" width="31.8" height="16.8" rx=".6"/>
<rect x="810.0" y="499.1" width="31.8" height="16.8" rx=".6"/>
<rect x="402.5" y="519.2" width="31.8" height="16.8" rx=".6"/>
<rect x="439.5" y="519.4" width="31.8" height="16.8" rx=".6"/>
<rect x="476.6" y="519.6" width="31.8" height="16.8" rx=".6"/>
<rect x="513.6" y="519.8" width="31.8" height="16.8" rx=".6"/>
<rect x="550.6" y="520.0" width="31.8" height="16.8" rx=".6"/>
<rect x="587.6" y="520.2" width="31.8" height="16.8" rx=".6"/>
<rect x="624.7" y="520.4" width="31.8" height="16.8" rx=".6"/>
<rect x="661.7" y="520.5" width="31.8" height="16.8" rx=".6"/>
<rect x="698.7" y="520.7" width="31.8" height="16.8" rx=".6"/>
<rect x="735.8" y="520.9" width="31.8" height="16.8" rx=".6"/>
<rect x="772.8" y="521.1" width="31.8" height="16.8" rx=".6"/>
<rect x="809.8" y="521.3" width="31.8" height="16.8" rx=".6"/>
<rect x="402.4" y="541.5" width="31.8" height="16.8" rx=".6"/>
<rect x="439.4" y="541.7" width="31.8" height="16.8" rx=".6"/>
<rect x="476.4" y="541.8" width="31.8" height="16.8" rx=".6"/>
<rect x="513.5" y="542.0" width="31.8" height="16.8" rx=".6"/>
<rect x="550.5" y="542.2" width="31.8" height="16.8" rx=".6"/>
<rect x="587.5" y="542.4" width="31.8" height="16.8" rx=".6"/>
<rect x="624.5" y="542.6" width="31.8" height="16.8" rx=".6"/>
<rect x="661.6" y="542.8" width="31.8" height="16.8" rx=".6"/>
<rect x="698.6" y="543.0" width="31.8" height="16.8" rx=".6"/>
<rect x="735.6" y="543.1" width="31.8" height="16.8" rx=".6"/>
<rect x="772.7" y="543.3" width="31.8" height="16.8" rx=".6"/>
<rect x="809.7" y="543.5" width="31.8" height="16.8" rx=".6"/>
<rect x="402.2" y="563.7" width="31.8" height="16.8" rx=".6"/>
<rect x="439.3" y="563.9" width="31.8" height="16.8" rx=".6"/>
<rect x="476.3" y="564.1" width="31.8" height="16.8" rx=".6"/>
<rect x="513.3" y="564.3" width="31.8" height="16.8" rx=".6"/>
<rect x="550.4" y="564.4" width="31.8" height="16.8" rx=".6"/>
<rect x="587.4" y="564.6" width="31.8" height="16.8" rx=".6"/>
<rect x="624.4" y="564.8" width="31.8" height="16.8" rx=".6"/>
<rect x="661.4" y="565.0" width="31.8" height="16.8" rx=".6"/>
<rect x="698.5" y="565.2" width="31.8" height="16.8" rx=".6"/>
<rect x="735.5" y="565.4" width="31.8" height="16.8" rx=".6"/>
<rect x="772.5" y="565.6" width="31.8" height="16.8" rx=".6"/>
<rect x="809.6" y="565.7" width="31.8" height="16.8" rx=".6"/>
<rect x="402.1" y="585.9" width="31.8" height="16.8" rx=".6"/>
<rect x="439.1" y="586.1" width="31.8" height="16.8" rx=".6"/>
<rect x="476.2" y="586.3" width="31.8" height="16.8" rx=".6"/>
<rect x="513.2" y="586.5" width="31.8" height="16.8" rx=".6"/>
<rect x="550.2" y="586.7" width="31.8" height="16.8" rx=".6"/>
<rect x="587.3" y="586.9" width="31.8" height="16.8" rx=".6"/>
<rect x="624.3" y="587.0" width="31.8" height="16.8" rx=".6"/>
<rect x="661.3" y="587.2" width="31.8" height="16.8" rx=".6"/>
<rect x="698.3" y="587.4" width="31.8" height="16.8" rx=".6"/>
<rect x="735.4" y="587.6" width="31.8" height="16.8" rx=".6"/>
<rect x="772.4" y="587.8" width="31.8" height="16.8" rx=".6"/>
<rect x="809.4" y="588.0" width="31.8" height="16.8" rx=".6"/>
<rect x="402.0" y="608.2" width="31.8" height="16.8" rx=".6"/>
<rect x="439.0" y="608.4" width="31.8" height="16.8" rx=".6"/>
<rect x="476.0" y="608.5" width="31.8" height="16.8" rx=".6"/>
<rect x="513.1" y="608.7" width="31.8" height="16.8" rx=".6"/>
<rect x="550.1" y="608.9" width="31.8" height="16.8" rx=".6"/>
<rect x="587.1" y="609.1" width="31.8" height="16.8" rx=".6"/>
<rect x="624.2" y="609.3" width="31.8" height="16.8" rx=".6"/>
<rect x="661.2" y="609.5" width="31.8" height="16.8" rx=".6"/>
<rect x="698.2" y="609.6" width="31.8" height="16.8" rx=".6"/>
<rect x="735.2" y="609.8" width="31.8" height="16.8" rx=".6"/>
<rect x="772.3" y="610.0" width="31.8" height="16.8" rx=".6"/>
<rect x="809.3" y="610.2" width="31.8" height="16.8" rx=".6"/>
<rect x="401.9" y="630.4" width="31.8" height="16.8" rx=".6"/>
<rect x="438.9" y="630.6" width="31.8" height="16.8" rx=".6"/>
<rect x="475.9" y="630.8" width="31.8" height="16.8" rx=".6"/>
<rect x="512.9" y="631.0" width="31.8" height="16.8" rx=".6"/>
<rect x="550.0" y="631.1" width="31.8" height="16.8" rx=".6"/>
<rect x="587.0" y="631.3" width="31.8" height="16.8" rx=".6"/>
<rect x="624.0" y="631.5" width="31.8" height="16.8" rx=".6"/>
<rect x="661.1" y="631.7" width="31.8" height="16.8" rx=".6"/>
<rect x="698.1" y="631.9" width="31.8" height="16.8" rx=".6"/>
<rect x="735.1" y="632.1" width="31.8" height="16.8" rx=".6"/>
<rect x="772.2" y="632.2" width="31.8" height="16.8" rx=".6"/>
<rect x="809.2" y="632.4" width="31.8" height="16.8" rx=".6"/>
<rect x="401.7" y="652.6" width="31.8" height="16.8" rx=".6"/>
<rect x="438.8" y="652.8" width="31.8" height="16.8" rx=".6"/>
<rect x="475.8" y="653.0" width="31.8" height="16.8" rx=".6"/>
<rect x="512.8" y="653.2" width="31.8" height="16.8" rx=".6"/>
<rect x="549.8" y="653.4" width="31.8" height="16.8" rx=".6"/>
<rect x="586.9" y="653.6" width="31.8" height="16.8" rx=".6"/>
<rect x="623.9" y="653.7" width="31.8" height="16.8" rx=".6"/>
<rect x="660.9" y="653.9" width="31.8" height="16.8" rx=".6"/>
<rect x="698.0" y="654.1" width="31.8" height="16.8" rx=".6"/>
<rect x="735.0" y="654.3" width="31.8" height="16.8" rx=".6"/>
<rect x="772.0" y="654.5" width="31.8" height="16.8" rx=".6"/>
<rect x="809.1" y="654.7" width="31.8" height="16.8" rx=".6"/>
<rect x="401.6" y="674.9" width="31.8" height="16.8" rx=".6"/>
<rect x="438.6" y="675.0" width="31.8" height="16.8" rx=".6"/>
<rect x="475.7" y="675.2" width="31.8" height="16.8" rx=".6"/>
<rect x="512.7" y="675.4" width="31.8" height="16.8" rx=".6"/>
<rect x="549.7" y="675.6" width="31.8" height="16.8" rx=".6"/>
<rect x="586.7" y="675.8" width="31.8" height="16.8" rx=".6"/>
<rect x="623.8" y="676.0" width="31.8" height="16.8" rx=".6"/>
<rect x="660.8" y="676.2" width="31.8" height="16.8" rx=".6"/>
<rect x="697.8" y="676.3" width="31.8" height="16.8" rx=".6"/>
<rect x="734.9" y="676.5" width="31.8" height="16.8" rx=".6"/>
<rect x="771.9" y="676.7" width="31.8" height="16.8" rx=".6"/>
<rect x="808.9" y="676.9" width="31.8" height="16.8" rx=".6"/>
<rect x="401.5" y="697.1" width="31.8" height="16.8" rx=".6"/>
<rect x="438.5" y="697.3" width="31.8" height="16.8" rx=".6"/>
<rect x="475.5" y="697.5" width="31.8" height="16.8" rx=".6"/>
<rect x="512.6" y="697.6" width="31.8" height="16.8" rx=".6"/>
<rect x="549.6" y="697.8" width="31.8" height="16.8" rx=".6"/>
<rect x="586.6" y="698.0" width="31.8" height="16.8" rx=".6"/>
<rect x="623.6" y="698.2" width="31.8" height="16.8" rx=".6"/>
<rect x="660.7" y="698.4" width="31.8" height="16.8" rx=".6"/>
<rect x="697.7" y="698.6" width="31.8" height="16.8" rx=".6"/>
<rect x="734.7" y="698.8" width="31.8" height="16.8" rx=".6"/>
<rect x="771.8" y="698.9" width="31.8" height="16.8" rx=".6"/>
<rect x="808.8" y="699.1" width="31.8" height="16.8" rx=".6"/>
<rect x="401.3" y="719.3" width="31.8" height="16.8" rx=".6"/>
<rect x="438.4" y="719.5" width="31.8" height="16.8" rx=".6"/>
<rect x="475.4" y="719.7" width="31.8" height="16.8" rx=".6"/>
<rect x="512.4" y="719.9" width="31.8" height="16.8" rx=".6"/>
<rect x="549.5" y="720.1" width="31.8" height="16.8" rx=".6"/>
<rect x="586.5" y="720.2" width="31.8" height="16.8" rx=".6"/>
<rect x="623.5" y="720.4" width="31.8" height="16.8" rx=".6"/>
<rect x="660.5" y="720.6" width="31.8" height="16.8" rx=".6"/>
<rect x="697.6" y="720.8" width="31.8" height="16.8" rx=".6"/>
<rect x="734.6" y="721.0" width="31.8" height="16.8" rx=".6"/>
<rect x="771.6" y="721.2" width="31.8" height="16.8" rx=".6"/>
<rect x="808.7" y="721.4" width="31.8" height="16.8" rx=".6"/>
<rect x="401.2" y="741.5" width="31.8" height="16.8" rx=".6"/>
<rect x="438.2" y="741.7" width="31.8" height="16.8" rx=".6"/>
<rect x="475.3" y="741.9" width="31.8" height="16.8" rx=".6"/>
<rect x="512.3" y="742.1" width="31.8" height="16.8" rx=".6"/>
<rect x="549.3" y="742.3" width="31.8" height="16.8" rx=".6"/>
<rect x="586.4" y="742.5" width="31.8" height="16.8" rx=".6"/>
<rect x="623.4" y="742.7" width="31.8" height="16.8" rx=".6"/>
<rect x="660.4" y="742.8" width="31.8" height="16.8" rx=".6"/>
<rect x="697.4" y="743.0" width="31.8" height="16.8" rx=".6"/>
<rect x="734.5" y="743.2" width="31.8" height="16.8" rx=".6"/>
<rect x="771.5" y="743.4" width="31.8" height="16.8" rx=".6"/>
<rect x="808.5" y="743.6" width="31.8" height="16.8" rx=".6"/>
<rect x="401.1" y="763.8" width="31.8" height="16.8" rx=".6"/>
<rect x="438.1" y="764.0" width="31.8" height="16.8" rx=".6"/>
<rect x="475.1" y="764.1" width="31.8" height="16.8" rx=".6"/>
<rect x="512.2" y="764.3" width="31.8" height="16.8" rx=".6"/>
<rect x="549.2" y="764.5" width="31.8" height="16.8" rx=".6"/>
<rect x="586.2" y="764.7" width="31.8" height="16.8" rx=".6"/>
<rect x="623.3" y="764.9" width="31.8" height="16.8" rx=".6"/>
<rect x="660.3" y="765.1" width="31.8" height="16.8" rx=".6"/>
<rect x="697.3" y="765.3" width="31.8" height="16.8" rx=".6"/>
<rect x="734.3" y="765.4" width="31.8" height="16.8" rx=".6"/>
<rect x="771.4" y="765.6" width="31.8" height="16.8" rx=".6"/>
<rect x="808.4" y="765.8" width="31.8" height="16.8" rx=".6"/>
</g>
<rect x="736.7" y="164.1" width="34.0" height="19.0" fill="#c2d0bd" stroke="#3f80d9" stroke-width="1.1"/>
<rect x="622.7" y="674.9" width="34.0" height="19.0" fill="#c2d0bd" stroke="#48ab52" stroke-width="1"/>
<g fill="#2a2a2a" stroke="#fff" stroke-opacity=".85" stroke-width="1.3">
<circle cx="565.6" cy="146.7" r="5.1"/>
<circle cx="605.1" cy="153.3" r="5.1"/>
<circle cx="638.9" cy="146.0" r="5.1"/>
<circle cx="680.0" cy="150.0" r="5.1"/>
<circle cx="715.6" cy="154.4" r="5.1"/>
<circle cx="757.8" cy="155.6" r="5.1"/>
<circle cx="795.1" cy="151.8" r="5.1"/>
<circle cx="563.3" cy="172.7" r="5.1"/>
<circle cx="611.8" cy="170.7" r="5.1"/>
<circle cx="641.8" cy="166.7" r="5.1"/>
<circle cx="677.8" cy="168.9" r="5.1"/>
<circle cx="713.8" cy="175.6" r="5.1"/>
<circle cx="791.1" cy="180.7" r="5.1"/>
<circle cx="570.0" cy="193.8" r="5.1"/>
<circle cx="603.8" cy="200.7" r="5.1"/>
<circle cx="641.8" cy="197.3" r="5.1"/>
<circle cx="683.8" cy="196.7" r="5.1"/>
<circle cx="717.1" cy="193.8" r="5.1"/>
<circle cx="751.8" cy="192.9" r="5.1"/>
<circle cx="796.7" cy="194.9" r="5.1"/>
<circle cx="566.0" cy="213.8" r="5.1"/>
<circle cx="604.9" cy="214.4" r="5.1"/>
<circle cx="638.9" cy="222.7" r="5.1"/>
<circle cx="674.0" cy="217.8" r="5.1"/>
<circle cx="721.8" cy="221.6" r="5.1"/>
<circle cx="754.9" cy="211.8" r="5.1"/>
<circle cx="796.7" cy="215.6" r="5.1"/>
<circle cx="571.6" cy="236.7" r="5.1"/>
<circle cx="598.9" cy="237.8" r="5.1"/>
<circle cx="637.8" cy="243.8" r="5.1"/>
<circle cx="674.9" cy="242.7" r="5.1"/>
<circle cx="758.9" cy="240.7" r="5.1"/>
<circle cx="790.0" cy="234.4" r="5.1"/>
<circle cx="570.0" cy="264.4" r="5.1"/>
<circle cx="606.0" cy="267.8" r="5.1"/>
<circle cx="645.1" cy="267.8" r="5.1"/>
<circle cx="674.9" cy="256.7" r="5.1"/>
<circle cx="711.1" cy="259.6" r="5.1"/>
<circle cx="751.8" cy="269.6" r="5.1"/>
<circle cx="791.1" cy="257.8" r="5.1"/>
<circle cx="566.0" cy="280.0" r="5.1"/>
<circle cx="720.4" cy="283.3" r="5.1"/>
<circle cx="753.8" cy="281.8" r="5.1"/>
<circle cx="786.7" cy="283.8" r="5.1"/>
<circle cx="461.8" cy="132.7" r="5.1"/>
<circle cx="451.8" cy="154.4" r="5.1"/>
<circle cx="497.1" cy="151.8" r="5.1"/>
<circle cx="528.9" cy="152.7" r="5.1"/>
<circle cx="464.9" cy="171.1" r="5.1"/>
<circle cx="494.9" cy="173.8" r="5.1"/>
<circle cx="536.0" cy="167.8" r="5.1"/>
<circle cx="460.7" cy="190.7" r="5.1"/>
<circle cx="497.1" cy="188.9" r="5.1"/>
<circle cx="532.7" cy="190.0" r="5.1"/>
<circle cx="456.0" cy="209.6" r="5.1"/>
<circle cx="498.9" cy="221.6" r="5.1"/>
<circle cx="530.7" cy="220.7" r="5.1"/>
<circle cx="454.0" cy="237.8" r="5.1"/>
<circle cx="495.6" cy="233.6" r="5.1"/>
<circle cx="527.8" cy="241.8" r="5.1"/>
<circle cx="458.9" cy="261.8" r="5.1"/>
<circle cx="494.0" cy="267.8" r="5.1"/>
<circle cx="524.9" cy="258.4" r="5.1"/>
<circle cx="462.9" cy="283.3" r="5.1"/>
<circle cx="500.0" cy="283.3" r="5.1"/>
<circle cx="526.7" cy="278.4" r="5.1"/>
<circle cx="607.8" cy="284.4" r="5.1"/>
<circle cx="640.7" cy="284.0" r="5.1"/>
<circle cx="456.0" cy="38.9" r="5.1"/>
<circle cx="497.8" cy="38.2" r="5.1"/>
<circle cx="536.0" cy="36.7" r="5.1"/>
<circle cx="570.7" cy="42.7" r="5.1"/>
<circle cx="458.9" cy="58.9" r="5.1"/>
<circle cx="500.0" cy="58.9" r="5.1"/>
<circle cx="537.8" cy="60.4" r="5.1"/>
<circle cx="563.3" cy="60.0" r="5.1"/>
<circle cx="603.3" cy="56.7" r="5.1"/>
<circle cx="457.1" cy="80.7" r="5.1"/>
<circle cx="497.8" cy="84.9" r="5.1"/>
<circle cx="527.1" cy="82.7" r="5.1"/>
<circle cx="462.9" cy="105.6" r="5.1"/>
<circle cx="527.8" cy="110.4" r="5.1"/>
<circle cx="641.1" cy="101.1" r="5.1"/>
<circle cx="717.5" cy="101.5" r="5.1"/>
<circle cx="494.9" cy="123.8" r="5.1"/>
<circle cx="531.8" cy="131.0" r="5.1"/>
<circle cx="415.7" cy="600.8" r="5.1"/>
<circle cx="455.8" cy="599.1" r="5.1"/>
<circle cx="490.1" cy="596.9" r="5.1"/>
<circle cx="534.7" cy="598.0" r="5.1"/>
<circle cx="561.7" cy="592.7" r="5.1"/>
<circle cx="602.6" cy="597.3" r="5.1"/>
<circle cx="413.9" cy="614.0" r="5.1"/>
<circle cx="459.2" cy="615.8" r="5.1"/>
<circle cx="494.7" cy="615.8" r="5.1"/>
<circle cx="524.8" cy="622.7" r="5.1"/>
<circle cx="569.7" cy="614.5" r="5.1"/>
<circle cx="606.3" cy="620.4" r="5.1"/>
<circle cx="421.9" cy="634.6" r="5.1"/>
<circle cx="455.1" cy="633.5" r="5.1"/>
<circle cx="487.1" cy="638.0" r="5.1"/>
<circle cx="531.9" cy="639.9" r="5.1"/>
<circle cx="561.7" cy="642.6" r="5.1"/>
<circle cx="604.9" cy="634.6" r="5.1"/>
<circle cx="413.0" cy="658.6" r="5.1"/>
<circle cx="455.8" cy="663.6" r="5.1"/>
<circle cx="487.1" cy="659.8" r="5.1"/>
<circle cx="529.7" cy="660.9" r="5.1"/>
<circle cx="568.5" cy="662.0" r="5.1"/>
<circle cx="606.7" cy="665.5" r="5.1"/>
<circle cx="415.7" cy="684.5" r="5.1"/>
<circle cx="453.9" cy="690.0" r="5.1"/>
<circle cx="497.6" cy="682.6" r="5.1"/>
<circle cx="526.7" cy="677.6" r="5.1"/>
<circle cx="564.9" cy="686.8" r="5.1"/>
<circle cx="602.8" cy="687.9" r="5.1"/>
<circle cx="410.7" cy="704.8" r="5.1"/>
<circle cx="459.2" cy="706.0" r="5.1"/>
<circle cx="490.1" cy="710.5" r="5.1"/>
<circle cx="526.7" cy="711.7" r="5.1"/>
<circle cx="567.9" cy="712.8" r="5.1"/>
<circle cx="597.6" cy="703.7" r="5.1"/>
<circle cx="423.1" cy="725.0" r="5.1"/>
<circle cx="451.9" cy="734.8" r="5.1"/>
<circle cx="491.9" cy="726.8" r="5.1"/>
<circle cx="532.9" cy="730.7" r="5.1"/>
<circle cx="562.8" cy="732.5" r="5.1"/>
<circle cx="594.8" cy="729.5" r="5.1"/>
<circle cx="448.9" cy="754.2" r="5.1"/>
<circle cx="486.0" cy="748.3" r="5.1"/>
<circle cx="534.0" cy="750.8" r="5.1"/>
<circle cx="561.7" cy="745.5" r="5.1"/>
<circle cx="602.8" cy="754.7" r="5.1"/>
<circle cx="640.0" cy="592.3" r="5.1"/>
<circle cx="675.0" cy="593.4" r="5.1"/>
<circle cx="719.0" cy="593.4" r="5.1"/>
<circle cx="751.0" cy="602.6" r="5.1"/>
<circle cx="783.0" cy="592.3" r="5.1"/>
<circle cx="645.1" cy="616.8" r="5.1"/>
<circle cx="675.0" cy="616.8" r="5.1"/>
<circle cx="714.8" cy="614.5" r="5.1"/>
<circle cx="751.0" cy="613.6" r="5.1"/>
<circle cx="791.0" cy="618.6" r="5.1"/>
<circle cx="638.2" cy="644.4" r="5.1"/>
<circle cx="683.1" cy="640.3" r="5.1"/>
<circle cx="717.8" cy="634.6" r="5.1"/>
<circle cx="744.8" cy="640.8" r="5.1"/>
<circle cx="789.4" cy="641.5" r="5.1"/>
<circle cx="638.9" cy="668.5" r="5.1"/>
<circle cx="678.9" cy="656.3" r="5.1"/>
<circle cx="719.0" cy="663.7" r="5.1"/>
<circle cx="748.0" cy="669.6" r="5.1"/>
<circle cx="786.9" cy="662.7" r="5.1"/>
<circle cx="672.8" cy="681.5" r="5.1"/>
<circle cx="709.1" cy="686.8" r="5.1"/>
<circle cx="746.0" cy="687.7" r="5.1"/>
<circle cx="789.9" cy="682.6" r="5.1"/>
<circle cx="645.1" cy="703.7" r="5.1"/>
<circle cx="681.9" cy="702.1" r="5.1"/>
<circle cx="719.4" cy="702.8" r="5.1"/>
<circle cx="752.1" cy="706.7" r="5.1"/>
<circle cx="789.0" cy="706.0" r="5.1"/>
<circle cx="642.3" cy="725.0" r="5.1"/>
<circle cx="672.0" cy="727.0" r="5.1"/>
<circle cx="713.7" cy="727.2" r="5.1"/>
<circle cx="752.1" cy="730.7" r="5.1"/>
<circle cx="793.3" cy="733.0" r="5.1"/>
<circle cx="641.9" cy="751.7" r="5.1"/>
<circle cx="680.1" cy="749.7" r="5.1"/>
<circle cx="717.8" cy="753.5" r="5.1"/>
<circle cx="756.0" cy="752.4" r="5.1"/>
<circle cx="793.8" cy="751.3" r="5.1"/>
<circle cx="824.3" cy="168.8" r="5.1"/>
<circle cx="830.7" cy="189.8" r="5.1"/>
<circle cx="828.2" cy="216.4" r="5.1"/>
<circle cx="818.6" cy="240.8" r="5.1"/>
<circle cx="818.0" cy="261.9" r="5.1"/>
<circle cx="818.5" cy="279.0" r="5.1"/>
<circle cx="455.2" cy="310.4" r="5.1"/>
<circle cx="486.2" cy="301.6" r="5.1"/>
<circle cx="533.3" cy="312.6" r="5.1"/>
<circle cx="569.3" cy="304.5" r="5.1"/>
<circle cx="614.4" cy="299.5" r="5.1"/>
<circle cx="649.0" cy="303.3" r="5.1"/>
<circle cx="671.8" cy="300.9" r="5.1"/>
<circle cx="712.1" cy="311.6" r="5.1"/>
<circle cx="746.6" cy="308.2" r="5.1"/>
<circle cx="792.8" cy="305.3" r="5.1"/>
<circle cx="828.0" cy="300.8" r="5.1"/>
<circle cx="447.8" cy="323.4" r="5.1"/>
<circle cx="497.2" cy="326.9" r="5.1"/>
<circle cx="526.9" cy="329.4" r="5.1"/>
<circle cx="566.7" cy="325.3" r="5.1"/>
<circle cx="610.6" cy="331.5" r="5.1"/>
<circle cx="636.6" cy="329.8" r="5.1"/>
<circle cx="679.3" cy="334.5" r="5.1"/>
<circle cx="720.4" cy="325.9" r="5.1"/>
<circle cx="762.4" cy="323.5" r="5.1"/>
<circle cx="788.2" cy="333.3" r="5.1"/>
<circle cx="819.9" cy="329.4" r="5.1"/>
<circle cx="447.2" cy="352.5" r="5.1"/>
<circle cx="498.8" cy="351.3" r="5.1"/>
<circle cx="538.0" cy="347.6" r="5.1"/>
<circle cx="571.5" cy="352.0" r="5.1"/>
<circle cx="606.2" cy="350.1" r="5.1"/>
<circle cx="648.4" cy="357.6" r="5.1"/>
<circle cx="678.1" cy="353.6" r="5.1"/>
<circle cx="706.9" cy="354.3" r="5.1"/>
<circle cx="755.6" cy="358.9" r="5.1"/>
<circle cx="796.2" cy="348.4" r="5.1"/>
<circle cx="824.5" cy="354.4" r="5.1"/>
<circle cx="446.8" cy="371.6" r="5.1"/>
<circle cx="486.7" cy="366.7" r="5.1"/>
<circle cx="521.6" cy="376.6" r="5.1"/>
<circle cx="560.0" cy="369.0" r="5.1"/>
<circle cx="602.3" cy="378.5" r="5.1"/>
<circle cx="633.1" cy="372.4" r="5.1"/>
<circle cx="679.5" cy="379.1" r="5.1"/>
<circle cx="721.9" cy="379.0" r="5.1"/>
<circle cx="748.1" cy="372.4" r="5.1"/>
<circle cx="786.8" cy="379.7" r="5.1"/>
<circle cx="835.8" cy="368.8" r="5.1"/>
<circle cx="449.7" cy="390.4" r="5.1"/>
<circle cx="487.9" cy="394.4" r="5.1"/>
<circle cx="532.0" cy="391.3" r="5.1"/>
<circle cx="557.4" cy="393.8" r="5.1"/>
<circle cx="601.7" cy="396.2" r="5.1"/>
<circle cx="650.4" cy="398.2" r="5.1"/>
<circle cx="678.7" cy="397.3" r="5.1"/>
<circle cx="718.9" cy="389.1" r="5.1"/>
<circle cx="760.4" cy="400.1" r="5.1"/>
<circle cx="797.0" cy="400.6" r="5.1"/>
<circle cx="824.3" cy="394.8" r="5.1"/>
<circle cx="411.1" cy="418.5" r="5.1"/>
<circle cx="447.3" cy="410.2" r="5.1"/>
<circle cx="487.3" cy="411.8" r="5.1"/>
<circle cx="526.9" cy="410.3" r="5.1"/>
<circle cx="557.2" cy="412.0" r="5.1"/>
<circle cx="596.2" cy="415.4" r="5.1"/>
<circle cx="631.7" cy="423.2" r="5.1"/>
<circle cx="680.5" cy="412.5" r="5.1"/>
<circle cx="710.3" cy="415.7" r="5.1"/>
<circle cx="749.6" cy="412.5" r="5.1"/>
<circle cx="796.3" cy="425.7" r="5.1"/>
<circle cx="825.7" cy="418.3" r="5.1"/>
<circle cx="410.6" cy="432.8" r="5.1"/>
<circle cx="452.8" cy="435.4" r="5.1"/>
<circle cx="499.5" cy="434.0" r="5.1"/>
<circle cx="520.5" cy="446.0" r="5.1"/>
<circle cx="567.6" cy="434.2" r="5.1"/>
<circle cx="604.9" cy="432.6" r="5.1"/>
<circle cx="641.7" cy="447.0" r="5.1"/>
<circle cx="685.4" cy="443.0" r="5.1"/>
<circle cx="710.4" cy="438.2" r="5.1"/>
<circle cx="745.5" cy="444.5" r="5.1"/>
<circle cx="789.9" cy="444.8" r="5.1"/>
<circle cx="822.8" cy="436.6" r="5.1"/>
<circle cx="425.0" cy="468.2" r="5.1"/>
<circle cx="462.9" cy="465.7" r="5.1"/>
<circle cx="499.2" cy="464.9" r="5.1"/>
<circle cx="524.4" cy="461.8" r="5.1"/>
<circle cx="564.0" cy="454.6" r="5.1"/>
<circle cx="594.5" cy="458.6" r="5.1"/>
<circle cx="636.1" cy="465.0" r="5.1"/>
<circle cx="687.1" cy="461.5" r="5.1"/>
<circle cx="723.8" cy="469.8" r="5.1"/>
<circle cx="761.2" cy="460.6" r="5.1"/>
<circle cx="783.5" cy="458.7" r="5.1"/>
<circle cx="820.0" cy="458.6" r="5.1"/>
<circle cx="421.1" cy="489.2" r="5.1"/>
<circle cx="462.5" cy="483.1" r="5.1"/>
<circle cx="495.8" cy="488.1" r="5.1"/>
<circle cx="521.4" cy="486.2" r="5.1"/>
<circle cx="575.0" cy="488.2" r="5.1"/>
<circle cx="608.8" cy="483.8" r="5.1"/>
<circle cx="634.4" cy="488.6" r="5.1"/>
<circle cx="674.5" cy="489.0" r="5.1"/>
<circle cx="724.3" cy="483.1" r="5.1"/>
<circle cx="750.0" cy="491.6" r="5.1"/>
<circle cx="793.4" cy="480.1" r="5.1"/>
<circle cx="818.5" cy="480.0" r="5.1"/>
<circle cx="426.6" cy="510.0" r="5.1"/>
<circle cx="448.5" cy="510.5" r="5.1"/>
<circle cx="502.2" cy="508.1" r="5.1"/>
<circle cx="526.6" cy="506.7" r="5.1"/>
<circle cx="559.3" cy="498.9" r="5.1"/>
<circle cx="613.1" cy="508.6" r="5.1"/>
<circle cx="641.2" cy="513.0" r="5.1"/>
<circle cx="676.4" cy="512.3" r="5.1"/>
<circle cx="721.3" cy="502.6" r="5.1"/>
<circle cx="746.8" cy="504.0" r="5.1"/>
<circle cx="783.6" cy="508.6" r="5.1"/>
<circle cx="821.0" cy="506.2" r="5.1"/>
<circle cx="411.0" cy="533.8" r="5.1"/>
<circle cx="452.5" cy="527.2" r="5.1"/>
<circle cx="494.1" cy="534.1" r="5.1"/>
<circle cx="527.9" cy="534.5" r="5.1"/>
<circle cx="566.5" cy="528.9" r="5.1"/>
<circle cx="604.0" cy="521.4" r="5.1"/>
<circle cx="639.4" cy="524.0" r="5.1"/>
<circle cx="667.7" cy="533.4" r="5.1"/>
<circle cx="708.1" cy="528.7" r="5.1"/>
<circle cx="756.2" cy="530.2" r="5.1"/>
<circle cx="785.2" cy="529.8" r="5.1"/>
<circle cx="826.8" cy="533.9" r="5.1"/>
<circle cx="410.4" cy="550.8" r="5.1"/>
<circle cx="450.3" cy="546.7" r="5.1"/>
<circle cx="497.8" cy="550.4" r="5.1"/>
<circle cx="530.6" cy="554.3" r="5.1"/>
<circle cx="574.6" cy="549.8" r="5.1"/>
<circle cx="605.7" cy="550.9" r="5.1"/>
<circle cx="640.7" cy="553.9" r="5.1"/>
<circle cx="676.5" cy="551.7" r="5.1"/>
<circle cx="714.1" cy="558.0" r="5.1"/>
<circle cx="755.5" cy="557.2" r="5.1"/>
<circle cx="797.4" cy="548.1" r="5.1"/>
<circle cx="826.8" cy="558.6" r="5.1"/>
<circle cx="424.9" cy="566.7" r="5.1"/>
<circle cx="447.6" cy="571.4" r="5.1"/>
<circle cx="483.6" cy="568.6" r="5.1"/>
<circle cx="520.7" cy="575.2" r="5.1"/>
<circle cx="571.9" cy="578.8" r="5.1"/>
<circle cx="596.4" cy="576.3" r="5.1"/>
<circle cx="643.5" cy="567.9" r="5.1"/>
<circle cx="685.0" cy="580.4" r="5.1"/>
<circle cx="708.8" cy="580.4" r="5.1"/>
<circle cx="749.4" cy="573.6" r="5.1"/>
<circle cx="798.2" cy="578.9" r="5.1"/>
<circle cx="818.7" cy="573.1" r="5.1"/>
<circle cx="825.7" cy="594.0" r="5.1"/>
<circle cx="819.1" cy="615.9" r="5.1"/>
<circle cx="829.5" cy="633.6" r="5.1"/>
<circle cx="826.0" cy="662.2" r="5.1"/>
<circle cx="815.2" cy="682.8" r="5.1"/>
<circle cx="827.2" cy="707.7" r="5.1"/>
<circle cx="815.9" cy="737.0" r="5.1"/>
<circle cx="422.9" cy="757.0" r="5.1"/>
<circle cx="816.5" cy="748.5" r="5.1"/>
<circle cx="407.8" cy="776.4" r="5.1"/>
<circle cx="449.4" cy="766.8" r="5.1"/>
<circle cx="489.5" cy="778.7" r="5.1"/>
<circle cx="534.4" cy="769.1" r="5.1"/>
<circle cx="558.1" cy="779.2" r="5.1"/>
<circle cx="603.5" cy="776.1" r="5.1"/>
<circle cx="630.9" cy="766.6" r="5.1"/>
<circle cx="680.0" cy="772.4" r="5.1"/>
<circle cx="704.7" cy="780.2" r="5.1"/>
<circle cx="752.9" cy="778.4" r="5.1"/>
<circle cx="779.0" cy="779.4" r="5.1"/>
<circle cx="815.6" cy="779.7" r="5.1"/>
</g>
<circle cx="713.8" cy="241" r="8.900" fill="#333" stroke="#fff" stroke-opacity=".8" stroke-width="1"/>
<polygon points="713.80,235.70 715.15,239.44 719.13,239.57 715.99,242.01 717.09,245.83 713.80,243.60 710.51,245.83 711.61,242.01 708.47,239.57 712.45,239.44" fill="#e8185e"/>
<circle cx="674" cy="282" r="8.900" fill="#333" stroke="#fff" stroke-opacity=".8" stroke-width="1"/>
<polygon points="674.00,276.70 675.35,280.44 679.33,280.57 676.19,283.01 677.29,286.83 674.00,284.60 670.71,286.83 671.81,283.01 668.67,280.57 672.65,280.44" fill="#e8185e"/>
<circle cx="500.7" cy="105.6" r="8.800" fill="#333" stroke="#fff" stroke-opacity=".8" stroke-width="1"/>
<path d="M495.9,107.4 l-1,-5.600 l3,2.300 l2.800,-4.200 l2.800,4.200 l3,-2.300 l-1,5.600 z M496.3,108.8 h8.800 v1.700 h-8.800 z" fill="#f5901f"/>
<circle cx="752.900" cy="170" r="4.600" fill="#3a2212" stroke="#3f8ad8" stroke-width="2.200"/>
<g fill="#2a2a2a" stroke="#fff" stroke-opacity=".8" stroke-width="1">
<circle cx="202.0" cy="2.0" r="5"/>
<circle cx="200.0" cy="12.0" r="5"/>
<circle cx="197.0" cy="21.5" r="5"/>
<circle cx="195.0" cy="29.4" r="5"/>
<circle cx="193.0" cy="37.0" r="5"/>
<circle cx="191.0" cy="44.0" r="5"/>
<circle cx="187.6" cy="56.0" r="5"/>
<circle cx="185.7" cy="62.7" r="5"/>
<circle cx="183.7" cy="69.6" r="5"/>
<circle cx="180.8" cy="81.4" r="5"/>
<circle cx="177.8" cy="91.8" r="5"/>
<circle cx="168.0" cy="127.6" r="5"/>
<circle cx="165.0" cy="139.0" r="5"/>
<circle cx="164.0" cy="146.0" r="5"/>
<circle cx="160.0" cy="156.6" r="5"/>
<circle cx="159.0" cy="176.0" r="5"/>
<circle cx="159.0" cy="186.0" r="5"/>
<circle cx="159.0" cy="195.0" r="5"/>
<circle cx="160.0" cy="205.0" r="5"/>
<circle cx="160.0" cy="215.0" r="5"/>
<circle cx="163.0" cy="265.0" r="5"/>
<circle cx="163.5" cy="273.0" r="5"/>
<circle cx="164.0" cy="280.0" r="5"/>
<circle cx="164.5" cy="288.0" r="5"/>
<circle cx="179.0" cy="596.0" r="5"/>
<circle cx="179.5" cy="604.0" r="5"/>
<circle cx="180.0" cy="611.0" r="5"/>
<circle cx="180.0" cy="617.0" r="5"/>
<circle cx="182.0" cy="653.0" r="5"/>
<circle cx="182.5" cy="663.0" r="5"/>
<circle cx="183.0" cy="672.0" r="5"/>
<circle cx="183.5" cy="681.0" r="5"/>
<circle cx="183.5" cy="690.0" r="5"/>
<circle cx="184.0" cy="710.0" r="5"/>
<circle cx="184.5" cy="719.0" r="5"/>
<circle cx="185.0" cy="728.0" r="5"/>
<circle cx="185.5" cy="736.0" r="5"/>
<circle cx="186.0" cy="746.0" r="5"/>
</g>
<g font-family="Liberation Sans,Arial,sans-serif" font-size="10.5" fill="#fff" stroke="#333" stroke-width="1.6" paint-order="stroke" text-anchor="middle" textLength="20" lengthAdjust="spacingAndGlyphs">
<text x="189.6" y="54" textLength="24" lengthAdjust="spacingAndGlyphs">КЛ-11</text>
<text x="158" y="172.5" textLength="24" lengthAdjust="spacingAndGlyphs">КЛ-10</text>
<text x="183" y="705" textLength="24" lengthAdjust="spacingAndGlyphs">КЛ-08</text>
</g>
</svg>
<!-- map UI -->
<div id="panelshadow"></div>
</div>
<div id="title">Составление схемы кладбища</div>

<!-- left column buttons -->
<div class="mb" style="left:18px;top:17px"><svg viewBox="0 0 36 36">
<g stroke-linejoin="round" stroke-width="1.200">
<g fill="#23759a" stroke="#23759a">
<path d="M22.100,5.200 L24.700,6.300 C26.300,8 27,10 27.100,12 L23.600,9.500 L21.200,9 Z"/>
<path d="M27.600,28.800 L24.900,30.200 L19.200,29.500 L24.500,27.600 L26,26.200 Z"/>
<path d="M5,21.400 L4.500,19.300 L8,14.400 L9.300,14 L8.600,18.800 L9,20.700 Z"/>
</g>
<g fill="#2e8fb3" stroke="#2e8fb3">
<path d="M9,11.300 L12,5.900 C15,4.900 19,4.900 22.100,5.200 L23.200,6.300 L19.700,11.600 C17,12.600 12,12.600 9.500,11.800 Z"/>
<path d="M28.200,14 C30,15.500 31.200,17.500 31.500,19.400 L27.700,28.700 C25.500,27.500 23.600,25 22.900,22.600 L26.400,15.700 Z"/>
<path d="M5.200,21.700 C7.500,20.900 10,20.800 11.900,21.500 L16.500,29.900 C15,30.800 13,31 11.400,30.700 L7.300,26.300 Z"/>
</g></g>
<circle cx="18.400" cy="19.300" r="6.300" fill="#23759a"/>
<path d="M13.300,17.200 C14.500,14.800 17,13.600 19.500,13.700 C21,13.900 22.500,14.700 23.300,16 L22.400,17.600 L20.700,18.400 L19,17.600 L17.600,19 L16.600,22.300 L15.500,21.600 L14.500,19.400 L13,18.600 Z" fill="#fff"/>
<path d="M16.500,15.500 L18.500,16.500 L17.500,17.500 Z" fill="#23759a" opacity=".7"/><circle cx="18.400" cy="19.300" r="6" fill="none" stroke="#23759a" stroke-width="1.300"/>
</svg></div>

<div class="mb" style="left:61px;top:17px"><svg viewBox="0 0 36 36"><g class="ic" stroke-width="1.250">
<path transform="translate(17.800 18.200) rotate(43)" d="M-13.59,-1.55 A4,4 0 0 1 -6.10,-1.25 L6.10,-1.25 A4,4 0 0 1 13.59,-1.55 L10.20,-1.55 A1.55,1.55 0 0 0 10.20,1.55 L13.59,1.55 A4,4 0 0 1 6.10,1.25 L-6.10,1.25 A4,4 0 0 1 -13.59,1.55 L-10.20,1.55 A1.55,1.55 0 0 0 -10.20,-1.55 Z"/>
<g transform="translate(15.100 19.900) rotate(-43)" fill="#fff">
<path d="M10.300,-1.250 H-9.200 a1.250,1.250 0 0 0 0,2.500 H10.300"/>
<path d="M10.300,-5.800 h3.400 a1.400,1.400 0 0 1 1.400,1.400 v8.800 a1.400,1.400 0 0 1 -1.400,1.400 h-3.400 Z"/>
<path d="M15.100,-3.500 h1.300 M15.100,-0.500 h1.300" stroke-width="1"/>
</g></g></svg></div>

<div class="mb" style="left:105px;top:17px"><svg viewBox="0 0 36 36"><g class="ic" stroke-width="1.3"><circle cx="18" cy="18" r="10.6"/><path d="M18,15.9V24"/></g><circle cx="18" cy="13.3" r="1" fill="#666"/></svg></div>

<div class="mb" style="left:18px;top:61px"><svg viewBox="0 0 36 36"><g class="ic" stroke-width="1.3"><path d="M18,7.6 L29,14 L18,20.4 L7,14 Z"/><path d="M7.6,20.4 L18,27.6 L28.4,20.4"/></g></svg></div>

<div class="mb" style="left:18px;top:105px"><svg viewBox="0 0 36 36"><g class="ic" stroke-width="1.3"><path d="M8.4,9.8 L14.4,8.6 L21.6,9.8 L28,8.6 V26.4 L21.6,25.2 L14.4,27.2 L8.4,25.6 Z M14.4,8.6 V27.2 M21.6,9.8 V25.2"/></g></svg></div>

<div class="mb" style="left:18px;top:149px"><svg viewBox="0 0 36 36"><g class="ic" stroke-width="1.3"><path d="M16.5,9.3 H10 a1.4,1.4 0 0 0 -1.4,1.4 V25.3 a1.4,1.4 0 0 0 1.4,1.4 H16.500"/><path d="M19.3,6.6 V29.6"/><path d="M21.5,9.3 H26 a1.4,1.4 0 0 1 1.4,1.4 V25.3 a1.4,1.4 0 0 1 -1.4,1.4 H21.500"/><path d="M21.4,14 L25.5,9.6 M21.4,18.5 L27.3,12 M21.4,23 L27.3,16.5 M22.3,26.4 L27.3,21 M25.6,26.5 L27.3,24.700" stroke-width="1.1"/></g></svg></div>

<div class="mb" style="left:18px;top:193px"><svg viewBox="0 0 36 36"><g class="ic" stroke-width="1.4"><path d="M8.6,9.8 L19.3,9.6 C18.6,13 18.6,15.5 19,18 M8.6,9.800 C9.4,13.500 9.400,16.500 8.8,20 L15.8,20.1"/><path d="M26.500,15.8 V9.8 M24.300,11.800 L26.500,9.6 L28.700,11.800" stroke-width="1.2"/><path d="M18.800,18.500 H25.600 L27.800,20.700 V28.600 H18.800 Z M21,22.500 H25.600 M21,24.500 H25.600 M21,26.500 H25.600" stroke-width="1.1"/></g><g fill="#666"><rect x="7" y="8.2" width="3.200" height="3.200"/><rect x="17.700" y="8" width="3.200" height="3.200"/><rect x="7.200" y="18.400" width="3.200" height="3.200"/></g></svg></div>

<div class="mb" style="left:18px;top:237px"><svg viewBox="0 0 36 36"><g class="ic" stroke-width="1.4"><path d="M11.200,8.600 H21.500 L26.200,13.300 V26.200 a1.300,1.300 0 0 1 -1.300,1.300 H11.200 a1.300,1.300 0 0 1 -1.300,-1.300 V9.900 a1.300,1.300 0 0 1 1.300,-1.300 Z M21.500,8.600 V13.300 H26.200"/><path d="M14.200,20.300 L17,23 L22.300,17.700"/></g></svg></div>

<div class="mb" style="left:18px;top:281px"><svg viewBox="0 0 36 36"><g class="ic" stroke-width="1.5"><path d="M8.600,13.800 L20.800,13.500 C20,17.500 20,21.500 20.800,25.600 C16.500,24.600 12.500,24.600 8.600,25.600 C9.500,21.500 9.500,17.500 8.600,13.800 Z"/><path d="M25.500,9.400 V16.800 M21.800,13.100 H29.200"/></g><g fill="#666"><rect x="6.900" y="12.100" width="3.400" height="3.400"/><rect x="19.100" y="11.900" width="3.400" height="3.400"/><rect x="6.900" y="23.900" width="3.400" height="3.400"/><rect x="19.100" y="23.900" width="3.400" height="3.400"/></g></svg></div>

<!-- bottom-left -->
<div class="mb" style="left:18px;top:618px"><svg viewBox="0 0 36 36"><g class="ic" stroke-width="1.2"><path d="M9,9.800 L12.300,18.600 L18.800,10.800 L20.300,15"/><g transform="translate(22.700 23.100) rotate(-40)"><rect x="-8.800" y="-3.200" width="17.600" height="6.400"/><path d="M-5.500,-3.200 v2.400 M-2.200,-3.200 v2.400 M1.100,-3.200 v2.400 M4.400,-3.200 v2.400"/></g></g><g fill="#666"><rect x="7.600" y="8.300" width="2.800" height="2.800"/><rect x="11" y="17.200" width="2.800" height="2.800"/><rect x="17.400" y="9.400" width="2.800" height="2.800"/></g></svg></div>

<div class="mb" style="left:18px;top:662px"><svg viewBox="0 0 36 36"><g class="ic" stroke-width="1.2"><rect x="9.200" y="9.200" width="11.600" height="11.400"/><g transform="translate(22.800 23.400) rotate(-40)"><rect x="-8.800" y="-3.200" width="17.600" height="6.400" fill="#fff"/><path d="M-5.500,-3.200 v2.400 M-2.200,-3.200 v2.400 M1.100,-3.200 v2.400 M4.400,-3.200 v2.400"/></g></g><g fill="#666"><rect x="7.800" y="7.800" width="2.800" height="2.800"/><rect x="19.400" y="7.800" width="2.800" height="2.800"/><rect x="7.800" y="19.200" width="2.800" height="2.800"/></g></svg></div>

<div class="mb" style="left:18px;top:705px"><svg viewBox="0 0 36 36"><g class="ic" stroke-width="1.3"><circle cx="11.500" cy="18" r="2.700"/><circle cx="23.800" cy="10.800" r="2.700"/><circle cx="23.800" cy="25.400" r="2.700"/><path d="M13.900,16.600 L21.400,12.200 M13.900,19.400 L21.400,24"/></g></svg></div>

<div class="mb" style="left:61px;top:705px"><svg viewBox="0 0 36 36"><g class="ic" stroke-width="1.4"><path d="M11.600,13.200 V8 H24.400 V13.200"/><path d="M11.600,24.600 H9 a1.500,1.500 0 0 1 -1.500,-1.500 V14.700 a1.500,1.500 0 0 1 1.500,-1.500 H27 a1.500,1.500 0 0 1 1.500,1.500 V23.100 a1.500,1.500 0 0 1 -1.500,1.500 H24.400"/><path d="M11.600,20.600 H24.400 V28 H11.600 Z"/><path d="M22.700,16.700 H24.800" stroke-width="1.800"/></g></svg></div>

<div class="mb" style="left:105px;top:705px"><svg viewBox="0 0 36 36"><g class="ic" stroke-width="1.3"><path d="M18,8 L21,14.800 L28.600,15.500 L22.900,20.400 L24.600,27.700 L18,23.800 L11.400,27.700 L13.100,20.400 L7.400,15.500 L15,14.800 Z"/></g></svg></div>

<!-- top right -->
<div class="mb" style="left:675px;top:17px"><svg viewBox="0 0 36 36"><g class="ic" stroke-width="1.2"><path d="M8.600,10.200 H21 M24.800,10.200 H27.400 M8.600,18 H12.600 M16.400,18 H27.400 M8.600,25.800 H18.600 M22.400,25.800 H27.400"/><circle cx="22.900" cy="10.200" r="1.900"/><circle cx="14.500" cy="18" r="1.900"/><circle cx="20.500" cy="25.800" r="1.900"/></g></svg></div>

<div class="mb" style="left:719px;top:17px;width:75px"><span id="usr" style="position:absolute;left:8.5px;top:8.5px;font-size:13.8px;letter-spacing:-.2px;line-height:18px;color:#555">user</span><svg viewBox="0 0 36 36" style="left:39px"><g class="ic" stroke-width="1.600" stroke="#5a5a5a" stroke-linecap="butt" stroke-linejoin="miter"><path d="M20.300,12.400 V7.400 H8 V28.600 H20.300 V23.600"/><path d="M12.500,18 H28.600 M22.600,12 L28.600,18 L22.600,24"/></g></svg></div>

<div class="bar" style="top:61px"><svg viewBox="0 0 36 36" style="position:absolute;left:1px;top:0;width:36px;height:36px"><g class="ic" stroke-width="1.3"><circle cx="17.300" cy="18" r="10.600"/><path d="M17.300,15.900V24"/></g><circle cx="17.300" cy="13.300" r="1" fill="#666"/></svg><span class="t">Информация по кладбищам</span><svg viewBox="0 0 12 10" style="position:absolute;left:241px;top:12px;width:12px;height:10px"><path d="M0.500,5 H10.500 M6.800,1.200 L10.600,5 L6.800,8.800" fill="none" stroke="#2b2b2b" stroke-width="1.600"/></svg></div>
<div class="bar" style="top:105px"><svg viewBox="0 0 36 36" style="position:absolute;left:0;top:0;width:36px;height:36px"><g class="ic" stroke-width="1.300"><circle cx="17.300" cy="18" r="4"/><path d="M27.74,16.18 L27.74,19.82 L25.27,19.91 L24.29,22.28 L25.97,24.10 L23.40,26.67 L21.58,24.99 L19.21,25.97 L19.12,28.44 L15.48,28.44 L15.39,25.97 L13.02,24.99 L11.20,26.67 L8.63,24.10 L10.31,22.28 L9.33,19.91 L6.86,19.82 L6.86,16.18 L9.33,16.09 L10.31,13.72 L8.63,11.90 L11.20,9.33 L13.02,11.01 L15.39,10.03 L15.48,7.56 L19.12,7.56 L19.21,10.03 L21.58,11.01 L23.40,9.33 L25.97,11.90 L24.29,13.72 L25.27,16.09 Z"/></g></svg><span class="t" style="left:36px;letter-spacing:-.31px">Кладбища в разработке</span><svg viewBox="0 0 12 10" style="position:absolute;left:241px;top:12px;width:12px;height:10px"><path d="M0.500,5 H10.500 M6.800,1.200 L10.600,5 L6.800,8.800" fill="none" stroke="#2b2b2b" stroke-width="1.600"/></svg></div>

<!-- bottom right -->
<div class="mb" style="left:671px;top:705px"><svg viewBox="0 0 36 36"><g class="ic" stroke-width="1.300"><circle cx="16" cy="16" r="8.200"/><path d="M22,22 L28.600,28.600 M11.800,16 H20.200 M16,11.800 V20.200"/></g></svg></div>
<div class="mb" style="left:715px;top:705px"><svg viewBox="0 0 36 36"><g class="ic" stroke-width="1.300"><circle cx="16" cy="16" r="8.200"/><path d="M22,22 L28.600,28.600 M11.800,16 H20.200"/></g></svg></div>
<div class="mb" style="left:758px;top:705px"><svg viewBox="0 0 36 36"><circle cx="18" cy="18" r="10.400" fill="#6e6e6e"/><path d="M10.500,13 C12,10.500 14.500,9 17,8.800 L16,11 L18.500,12.500 L16.500,15 L13.500,14.500 L12,17 L14.500,19 L17.500,19.500 L18,22.500 L15.500,25.500 L14,22 L11,19.500 Z M21.500,10 L25.500,12.500 L27,16 L25,15 L23.500,17.500 L25,20.500 L23,24 L21.500,21 L20.500,16.500 L22.500,13.500 Z" fill="#fff"/></svg></div>

<!-- copyright + scale -->
<div style="position:absolute;left:366px;top:740px;width:80px;height:26px;background:#fff;border-radius:4px 4px 0 0;box-shadow:0 0 3px rgba(0,0,0,.3)">
<svg viewBox="0 0 20 12" style="position:absolute;left:32px;top:6px;width:16.500px;height:10px"><rect x="1" y="1" width="18" height="14" fill="#fff" stroke="#666" stroke-width="1.400"/><rect x="1" y="1" width="18" height="4" fill="#666"/><path d="M7,1V15M13,1V15M1,9.500H19" stroke="#9a9a9a" stroke-width="1.200"/></svg>
<span style="position:absolute;left:3.500px;top:13.500px;font-size:10px;line-height:12px;color:#444;white-space:nowrap">© copyrights</span></div>
<div style="position:absolute;left:451px;top:751px;width:119px;height:14px;background:rgba(255,255,255,.62);border-radius:3px 3px 0 0">
<span style="position:absolute;left:6px;top:2px;font-size:9.500px;line-height:12px;color:#8a8a8a;white-space:nowrap">1: 564</span>
<svg viewBox="0 0 12 8" style="position:absolute;left:99px;top:4px;width:12px;height:8px"><path d="M1,1.500 L6,6.500 L11,1.500" fill="none" stroke="#555" stroke-width="1.300"/></svg></div>
<!-- file dialog -->
<div id="dlg">
<div class="top"></div>
<div class="tb"></div>
<div class="body"></div>
<!-- title -->
<svg class="abs" style="left:7px;top:6px;width:17px;height:17px" viewBox="0 0 48 48"><circle cx="24" cy="24" r="22" fill="#fff"/><path d="M24,2 A22,22 0 0 1 43.050,13 L24,13 A11,11 0 0 0 14.470,18.500 L4.950,13 A22,22 0 0 1 24,2Z" fill="#db4437"/><path d="M43.050,13 A22,22 0 0 1 24,46 L33.530,29.500 A11,11 0 0 0 33.530,18.500 L24,13Z" fill="#fbc02d"/><path d="M4.950,13 L14.470,29.500 A11,11 0 0 0 33.530,29.500 L24,46 A22,22 0 0 1 4.950,13Z" fill="#0f9d58"/><circle cx="24" cy="24" r="10" fill="#fff"/><circle cx="24" cy="24" r="8" fill="#4285f4"/></svg>
<span class="tx" style="left:29px;top:8px">Открытие</span>
<svg class="abs" style="left:659px;top:9px;width:12px;height:12px" viewBox="0 0 12 12"><path d="M0.800,0.800 L11.200,11.200 M11.200,0.800 L0.800,11.200" stroke="#111" stroke-width="1.100" fill="none"/></svg>
<!-- nav -->
<svg class="abs" style="left:10px;top:38px;width:90px;height:18px" viewBox="0 0 90 18"><g fill="none" stroke="#d2d2d2" stroke-width="1.700"><path d="M15,9 H3.500 M8.500,4 L3.500,9 L8.500,14"/><path d="M33,9 H44.500 M39.500,4 L44.500,9 L39.500,14"/></g><path d="M59.500,7 L62,9.500 L64.500,7" fill="none" stroke="#d0d0d0" stroke-width="1.200"/><path d="M82.500,15.500 V3.800 M77.500,8.800 L82.500,3.800 L87.500,8.800" fill="none" stroke="#686868" stroke-width="1.800"/></svg>
<div class="box" style="left:106px;top:36px;width:348px;height:22px"></div>
<svg class="abs" style="left:108px;top:38px;width:18px;height:18px" viewBox="0 0 18 18"><path d="M6,1.500 H12 V8 H16.500 L9,16 L1.500,8 H6 Z" fill="#2e8ae6"/><path d="M6,1.500 H12 V8 H16.500 L14.500,10 L9,10 Z" fill="#4aa3f2" opacity=".6"/></svg>
<svg class="abs" style="left:132px;top:44px;width:5px;height:7px" viewBox="0 0 5 7"><path d="M1,0.800 L3.700,3.500 L1,6.200" fill="none" stroke="#7a7a7a" stroke-width="1.500"/></svg>
<span class="tx" id="a1" style="left:146px;top:40px">Этот компьютер</span>
<svg class="abs" style="left:245px;top:44px;width:5px;height:7px" viewBox="0 0 5 7"><path d="M1,0.800 L3.700,3.500 L1,6.200" fill="none" stroke="#7a7a7a" stroke-width="1.500"/></svg>
<span class="tx" id="a2" style="left:259px;top:40px">Загрузки</span>
<svg class="abs" style="left:317px;top:44px;width:5px;height:7px" viewBox="0 0 5 7"><path d="M1,0.800 L3.700,3.500 L1,6.200" fill="none" stroke="#7a7a7a" stroke-width="1.500"/></svg>
<svg class="abs" style="left:418px;top:44px;width:12px;height:8px" viewBox="0 0 12 8"><path d="M1.500,1.500 L6,6 L10.500,1.500" fill="none" stroke="#555" stroke-width="1.500"/></svg>
<div class="abs" style="left:433px;top:37px;width:1px;height:20px;background:#d9d9d9"></div>
<svg class="abs" style="left:436px;top:41px;width:14px;height:14px" viewBox="0 0 14 14"><path d="M10.300,4.300 A4.600,4.600 0 1 1 6.300,2.950" fill="none" stroke="#666" stroke-width="1.300"/><path d="M10.600,1 V4.500 H7.100" fill="none" stroke="#666" stroke-width="1.300"/></svg>
<div class="box" style="left:466px;top:36px;width:202px;height:22px"></div>
<span class="tx" id="srch" style="left:475px;top:40px;color:#6d6d6d;letter-spacing:-.22px">Search Загрузки</span>
<svg class="abs" style="left:646px;top:41px;width:14px;height:14px" viewBox="0 0 14 14"><circle cx="8.500" cy="5.500" r="3.500" fill="none" stroke="#666" stroke-width="1.400"/><path d="M6,8 L1.500,12.500" stroke="#666" stroke-width="1.700"/></svg>
<!-- toolbar -->
<span class="tx bl" id="t1" style="left:18px;top:73px">Упорядочить</span>
<svg class="abs" style="left:95px;top:77px;width:9px;height:6px" viewBox="0 0 9 6"><path d="M0.500,0.800 H8.500 L4.500,5.200 Z" fill="#1e3287"/></svg>
<span class="tx bl" id="t2" style="left:134px;top:73px;letter-spacing:-.16px">Новая папка</span>
<svg class="abs" style="left:557px;top:72px;width:20px;height:16px" viewBox="0 0 20 16"><rect x="1.500" y="1.500" width="4" height="12" fill="#fff" stroke="#8a8a8a" stroke-width="1"/><path d="M1.500,5.500 H5.500 M1.500,9.500 H5.500" stroke="#8a8a8a"/><rect x="3" y="3" width="1" height="1" fill="#3a8ee6"/><rect x="3" y="7" width="1" height="1" fill="#3a8ee6"/><rect x="3" y="11" width="1" height="1" fill="#e04a3a"/><path d="M8,3.500 H11.500 M13,3.500 H16.500 M8,7.500 H11.500 M13,7.500 H16.500 M8,11.500 H11.500 M13,11.500 H16.500" stroke="#777" stroke-width="1"/></svg>
<svg class="abs" style="left:582.500px;top:77px;width:9px;height:6px" viewBox="0 0 9 6"><path d="M0.500,0.800 H8.500 L4.500,5.200 Z" fill="#1e3287"/></svg>
<svg class="abs" style="left:612.500px;top:73px;width:17px;height:14px" viewBox="0 0 17 14"><rect x="1" y="1.500" width="15" height="11" fill="#fff" stroke="#777" stroke-width="1.200"/><rect x="1" y="1" width="15" height="1.500" fill="#777"/><path d="M5.500,2 V12" stroke="#777"/><rect x="9.500" y="3" width="5.500" height="8.500" fill="#4a9ae8"/></svg>
<svg class="abs" style="left:648.500px;top:72px;width:17px;height:17px" viewBox="0 0 17 17"><circle cx="8.500" cy="8.500" r="8" fill="#0a5ebf"/><text x="8.500" y="13" font-family="Liberation Sans,Arial,sans-serif" font-weight="700" font-size="12.500" fill="#fff" text-anchor="middle">?</text></svg>
<!-- tree -->
<div class="abs" style="left:0;top:200px;width:139px;height:24px;background:#d9d9d9"></div>
<div class="abs" style="left:139px;top:96px;width:17px;height:136px;background:#fff"></div>
<div class="abs" style="left:140px;top:126px;width:15px;height:25px;background:#cdcdcd"></div>
<svg class="abs" style="left:142px;top:101px;width:10px;height:8px" viewBox="0 0 10 8"><path d="M1.500,6 L5,2.200 L8.500,6" fill="none" stroke="#484848" stroke-width="1.900"/></svg>
<svg class="abs" style="left:142px;top:219px;width:10px;height:8px" viewBox="0 0 10 8"><path d="M1.500,2 L5,5.800 L8.500,2" fill="none" stroke="#484848" stroke-width="1.900"/></svg>
<div class="abs" style="left:157px;top:96px;width:1px;height:136px;background:#f0f0f0"></div>
<!-- tree icons -->
<svg class="abs" style="left:24px;top:108px;width:17px;height:16px" viewBox="0 0 17 16"><rect x="1" y="1" width="15" height="10" fill="#3cc0f0" stroke="#3a96d0" stroke-width="1"/><rect x="2" y="2" width="13" height="8" fill="#59cdf5"/><path d="M6,13 H11 M3,14.500 H14" stroke="#7a9ab0" stroke-width="1.300"/></svg>
<span class="tx" id="n1" style="left:45px;top:109px">Этот компьютер</span>
<svg class="abs" style="left:36px;top:132px;width:9px;height:16px" viewBox="0 0 9 16"><rect x="0.500" y="0.500" width="8" height="15" rx="1" fill="#222"/><rect x="1.300" y="1.600" width="6.400" height="11.400" fill="#39a8f0"/></svg>
<span class="tx" style="left:53px;top:133px;letter-spacing:-.3px">Pixel 8</span>
<svg class="abs" style="left:33px;top:156px;width:15px;height:16px" viewBox="0 0 15 16"><rect x="0.500" y="0.500" width="14" height="15" fill="#444"/><rect x="3.500" y="1.500" width="8" height="6" fill="#e8a33a"/><rect x="3.500" y="8.500" width="8" height="6" fill="#3a7ed8"/><path d="M4.500,7 L7,4 L9,6 L10.500,4.500" stroke="#4a9a3a" fill="none"/><g fill="#ddd"><rect x="1.200" y="2" width="1.400" height="1.600"/><rect x="1.200" y="5.200" width="1.400" height="1.600"/><rect x="1.200" y="8.400" width="1.400" height="1.600"/><rect x="1.200" y="11.600" width="1.400" height="1.600"/><rect x="12.400" y="2" width="1.400" height="1.600"/><rect x="12.400" y="5.200" width="1.400" height="1.600"/><rect x="12.400" y="8.400" width="1.400" height="1.600"/><rect x="12.400" y="11.600" width="1.400" height="1.600"/></g></svg>
<span class="tx" style="left:53px;top:157px;letter-spacing:-.45px">Видео</span>
<svg class="abs" style="left:34px;top:180px;width:13px;height:16px" viewBox="0 0 13 16"><path d="M0.500,0.500 H9 L12.500,4 V15.500 H0.500 Z" fill="#fff" stroke="#8a8a8a"/><path d="M9,0.500 V4 H12.500" fill="none" stroke="#8a8a8a"/><path d="M2.500,3.500 H6.500 M2.500,8.500 H10.500 M2.500,11.500 H10.500" stroke="#5aa2ea" stroke-width=".9"/><path d="M2.500,5.500 H5.500 M7,10 H10.500 M2.500,13.500 H8" stroke="#9cc6f2" stroke-width=".8"/></svg>
<span class="tx" style="left:53px;top:181px">Документы</span>
<svg class="abs" style="left:31px;top:203px;width:19px;height:19px" viewBox="0 0 18 18"><path d="M6,1.500 H12 V8 H16.500 L9,16 L1.500,8 H6 Z" fill="#2e8ae6"/></svg>
<span class="tx" style="left:53px;top:205px">Загрузки</span>
<div class="abs" style="left:31px;top:229px;width:16px;height:3px;border:1px solid #999;border-bottom:0;background:#fff"></div>
<span class="tx" style="left:53px;top:229px;height:3px;overflow:hidden;line-height:14px">Изображения</span>
<!-- list -->
<span class="tx" style="left:176px;top:102px;color:#4c607a">Имя</span>
<div class="abs" style="left:620px;top:96px;width:1px;height:26px;background:#e5e5e5"></div>
<span class="tx" style="left:627px;top:102px;color:#4c607a;width:37px;overflow:hidden;letter-spacing:-.5px">Дата и:</span>
<svg class="abs" style="left:166px;top:136px;width:11px;height:8px" viewBox="0 0 11 8"><path d="M1,1.500 L5.500,6 L10,1.500" fill="none" stroke="#8a8a8a" stroke-width="1.100"/></svg>
<span class="tx bl" id="grp" style="left:181px;top:131px;font-size:14.800px;line-height:18px">Сегодня (4)</span>
<div class="abs" style="left:266px;top:140px;width:390px;height:1px;background:#e2e2e2"></div>
<div class="abs" style="left:173px;top:155px;width:490px;height:22px;background:#cce8ff;border:1px solid #99d1ff;border-right:0"></div>
<svg class="abs" style="left:180px;top:158px;width:13px;height:16px" viewBox="0 0 13 16"><path d="M0.500,0.500 H8.500 L12.500,4.500 V15.500 H0.500 Z" fill="#fff" stroke="#6a6a6a"/><path d="M8.500,0.500 V4.500 H12.500" fill="none" stroke="#6a6a6a"/><rect x="3" y="5" width="6.500" height="6" fill="#2f86dd"/><path d="M4,9.500 L6,7.500 L7.500,9 L8.500,8" stroke="#cfe6fa" fill="none" stroke-width=".9"/></svg>
<span class="tx fn" style="left:199px;top:159px">Колумбарий_фото.jpg</span>
<span class="tx" style="left:627px;top:159px;color:#6d6d6d;width:37px;overflow:hidden;letter-spacing:-.62px">16.05.2</span>
<svg class="abs" style="left:180px;top:179px;width:13px;height:16px" viewBox="0 0 13 16"><path d="M0.500,0.500 H8.500 L12.500,4.500 V15.500 H0.500 Z" fill="#fff" stroke="#6a6a6a"/><path d="M8.500,0.500 V4.500 H12.500" fill="none" stroke="#6a6a6a"/><rect x="3" y="5" width="6.500" height="6" fill="#2f86dd"/><path d="M4,9.500 L6,7.500 L7.500,9 L8.500,8" stroke="#cfe6fa" fill="none" stroke-width=".9"/></svg>
<span class="tx fn" style="left:199px;top:180px;letter-spacing:-.17px">Квартал_фото.jpg</span>
<span class="tx" style="left:627px;top:180px;color:#6d6d6d;width:37px;overflow:hidden;letter-spacing:-.62px">16.05.2</span>
<svg class="abs" style="left:180px;top:200px;width:13px;height:16px" viewBox="0 0 13 16"><path d="M0.500,0.500 H8.500 L12.500,4.500 V15.500 H0.500 Z" fill="#fff" stroke="#6a6a6a"/><path d="M8.500,0.500 V4.500 H12.500" fill="none" stroke="#6a6a6a"/><rect x="3" y="5" width="6.500" height="6" fill="#2f86dd"/><path d="M4,9.500 L6,7.500 L7.500,9 L8.500,8" stroke="#cfe6fa" fill="none" stroke-width=".9"/></svg>
<span class="tx fn" style="left:199px;top:201px;letter-spacing:-.1px">Кладбища.jpeg</span>
<span class="tx" style="left:627px;top:201px;color:#6d6d6d;width:37px;overflow:hidden;letter-spacing:-.62px">16.05.2</span>
<!-- scrollbars of list -->
<div class="abs" style="left:663px;top:96px;width:17px;height:120px;background:#f0f0f0"></div>
<div class="abs" style="left:664px;top:113px;width:15px;height:17px;background:#cdcdcd"></div>
<svg class="abs" style="left:667px;top:101px;width:10px;height:8px" viewBox="0 0 10 8"><path d="M1.500,6 L5,2.200 L8.500,6" fill="none" stroke="#484848" stroke-width="1.900"/></svg>
<svg class="abs" style="left:667px;top:203px;width:10px;height:8px" viewBox="0 0 10 8"><path d="M1.500,2 L5,5.800 L8.500,2" fill="none" stroke="#484848" stroke-width="1.900"/></svg>
<div class="abs" style="left:158px;top:216px;width:505px;height:16px;background:#f0f0f0"></div>
<div class="abs" style="left:177px;top:217px;width:290px;height:14px;background:#cdcdcd"></div>
<svg class="abs" style="left:163px;top:219px;width:8px;height:10px" viewBox="0 0 8 10"><path d="M6,1.500 L2.200,5 L6,8.500" fill="none" stroke="#484848" stroke-width="1.900"/></svg>
<svg class="abs" style="left:650px;top:219px;width:8px;height:10px" viewBox="0 0 8 10"><path d="M2,1.500 L5.800,5 L2,8.500" fill="none" stroke="#484848" stroke-width="1.900"/></svg>
<!-- bottom -->
<span class="tx" id="fnl" style="left:131px;top:246px;letter-spacing:-.29px">Имя файла:</span>
<div class="abs" style="left:199px;top:241px;width:264px;height:24px;background:#fff;border:1px solid #7a7a7a"></div>
<span class="tx fn" style="left:205px;top:246px">Колумбарий_фото.jpg</span>
<svg class="abs" style="left:449px;top:249px;width:11px;height:8px" viewBox="0 0 11 8"><path d="M1,1.500 L5.500,6 L10,1.500" fill="none" stroke="#444" stroke-width="1.100"/></svg>
<div class="abs" style="left:474px;top:241px;width:189px;height:23px;background:#e1e1e1;border:1px solid #adadad"></div>
<span class="tx" id="flt" style="left:479px;top:246px;letter-spacing:-.24px">Все файлы (*.*)</span>
<svg class="abs" style="left:649px;top:249px;width:11px;height:8px" viewBox="0 0 11 8"><path d="M1,1.500 L5.500,6 L10,1.500" fill="none" stroke="#444" stroke-width="1.100"/></svg>
<div class="wbtn" style="left:476px;top:271px;width:87px;height:24px;border:2px solid #0078d7;line-height:19px">Открыть</div>
<div class="wbtn" style="left:575.500px;top:271px;width:87px;height:24px">Отмена</div>
<svg class="abs" style="left:669px;top:298px;width:10px;height:10px" viewBox="0 0 10 10"><g fill="#b5b5b5"><rect x="7" y="1" width="2" height="2"/><rect x="4" y="4" width="2" height="2"/><rect x="7" y="4" width="2" height="2"/><rect x="1" y="7" width="2" height="2"/><rect x="4" y="7" width="2" height="2"/><rect x="7" y="7" width="2" height="2"/></g></svg>
</div>
<!-- right panel -->
<div id="panel">
<div id="phead">
<svg style="position:absolute;left:13px;top:11px;width:18px;height:18px" viewBox="0 0 18 18"><path d="M17,9 H1.500 M9.500,0.800 L1.300,9 L9.500,17.200" fill="none" stroke="#fff" stroke-width="1.500"/></svg>
<div style="position:absolute;left:39px;top:10px;width:20px;height:20px;background:#8a9ea8;border:1.500px solid #0a0808;border-radius:2px"></div>
<svg viewBox="0 0 20 20" style="position:absolute;left:39px;top:10px;width:20px;height:20px"><path d="M5.200,5 Q5,4.200 6,4.200 H14 Q15,4.200 14.800,5 C15.200,9 13.500,12.300 11.600,13.400 L11.800,14.200 H12.700 V15.800 H7.300 V14.200 H8.200 L8.400,13.400 C6.500,12.300 4.800,9 5.200,5 Z" fill="#3f4c53"/><path d="M5.900,5.700 L6.900,5.900 L6.200,7.400 Z M14.100,5.700 L13.100,5.900 L13.800,7.400 Z" fill="#9fb2bb"/></svg>
<span class="ttl" id="ttl">КЛ-08 - Колумбарий</span>
<svg style="position:absolute;left:528.500px;top:11.500px;width:17px;height:17px" viewBox="0 0 18 18"><path d="M1.500,1.500 L16.500,16.500 M16.500,1.500 L1.500,16.500" fill="none" stroke="#fff" stroke-width="1.500"/></svg>
</div>
<div id="tabs">
<span class="tab" id="tb1" style="left:12px;letter-spacing:-.32px">Информация</span><div class="sep" style="left:108px"></div>
<span class="tab" id="tb2" style="left:121px;letter-spacing:-.5px">Ниши</span><div class="sep" style="left:168px"></div>
<span class="tab" id="tb3" style="left:181px;letter-spacing:-.2px">Фото</span><div class="sep" style="left:225px"></div>
<span class="tab" id="tb4" style="left:238px;letter-spacing:-.15px">История изменений</span><div class="sep" style="left:378px"></div>
<div class="ul"></div>
</div>
<div id="drop">
<div class="msg"><span id="dmsg">Перетащите файлы или выберите на компьютере</span></div>
<div class="pick"><svg viewBox="0 0 20 20" style="position:absolute;left:8px;top:5px;width:20px;height:20px"><g fill="none" stroke="#2b84a3" stroke-width="1.300" stroke-linecap="round"><path d="M5.500,11.500 L11.500,4.500 a2.800,2.800 0 0 1 4.300,3.600 L8.500,16.500 a4.200,4.200 0 0 1 -6.400,-5.400 L8.600,3.500"/><path d="M13.500,7 L7.500,14 a1.400,1.400 0 0 1 -2.100,-1.800"/><path d="M15.500,13 V18 M13,15.500 H18" stroke-width="1.400"/></g></svg><span id="pick">Выбрать файл</span></div>
</div>
<div id="pfoot">
<div class="btn" id="save"><span id="savet">Сохранить</span></div>
<div class="btn" id="cancel"><span id="cancelt">Отменить</span></div>
</div>
</div>
</body>
</html>
